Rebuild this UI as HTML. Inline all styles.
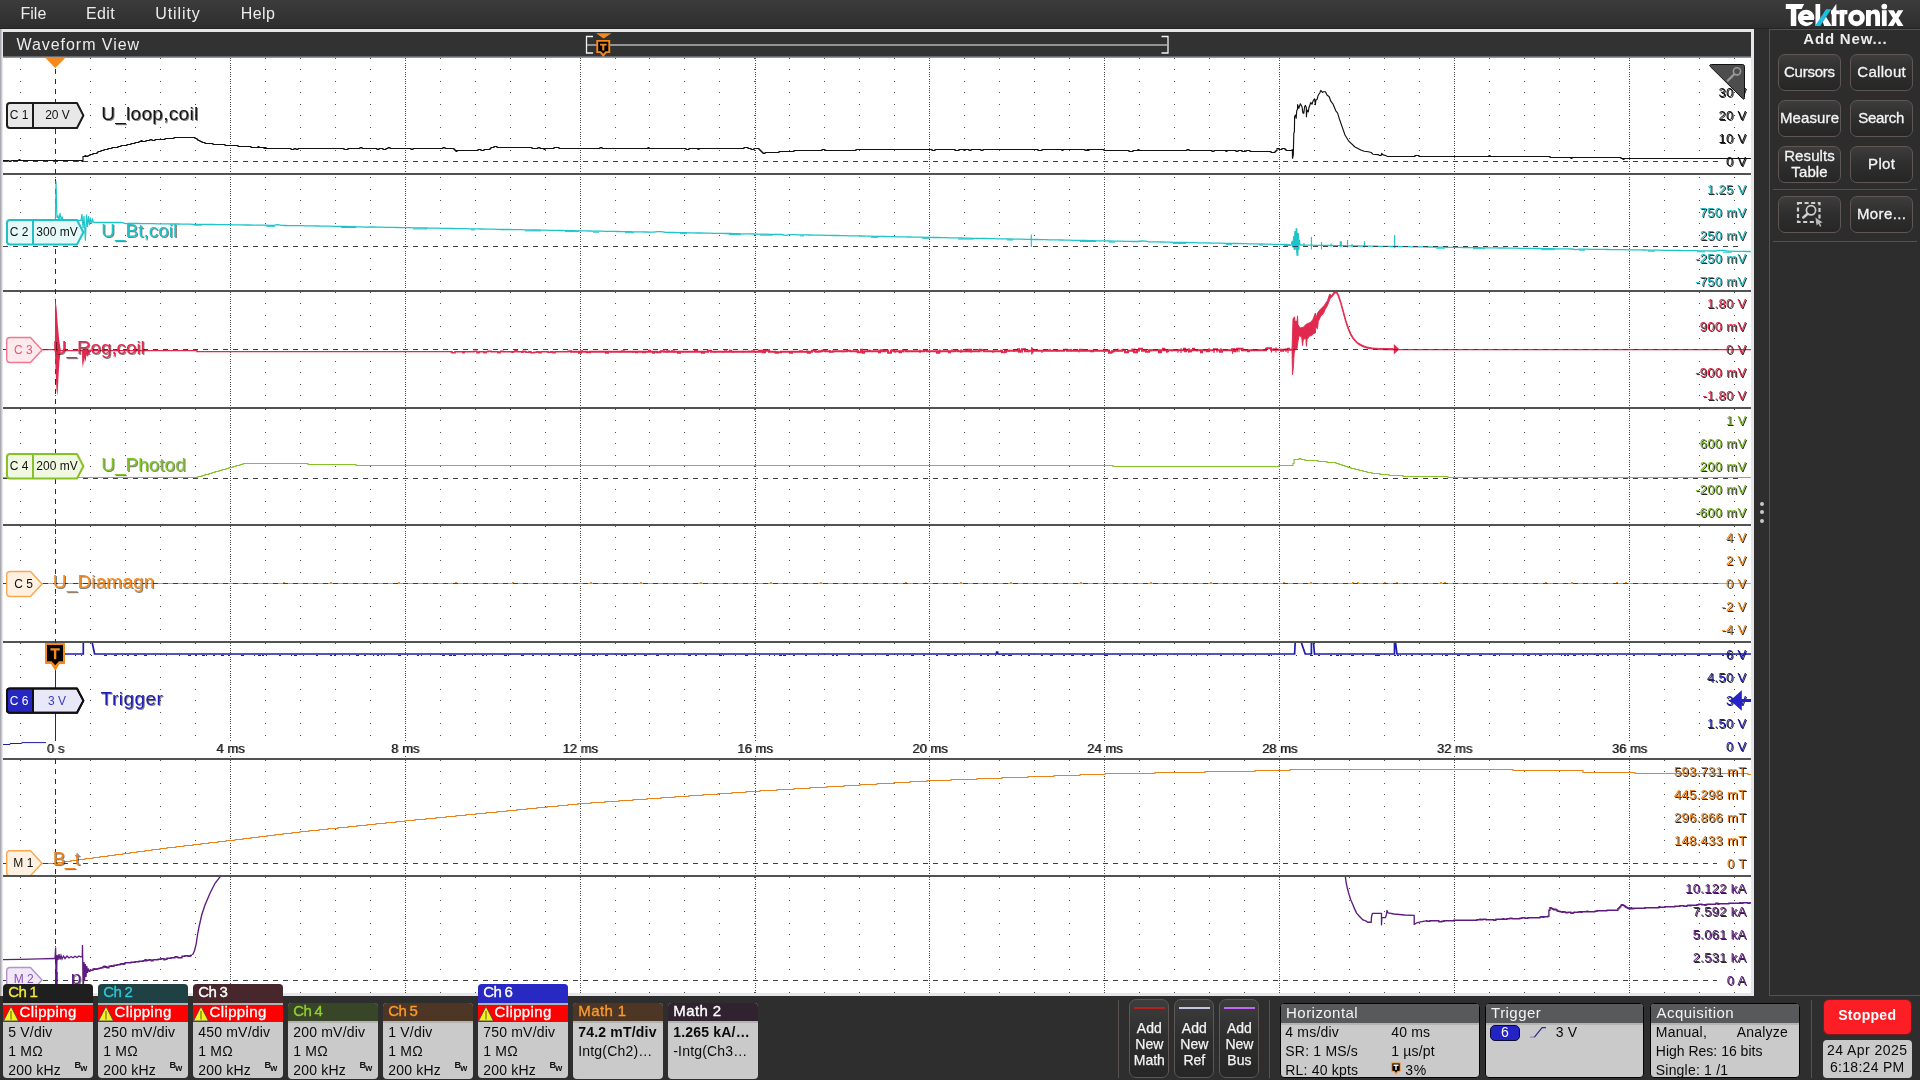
<!DOCTYPE html><html><head><meta charset="utf-8"><title>Waveform View</title><style>
html,body{margin:0;padding:0;}body{width:1920px;height:1080px;overflow:hidden;background:#2e2e2e;font-family:"Liberation Sans", sans-serif;position:relative;}
div{box-sizing:border-box;}svg{position:absolute;left:0;top:0;}
.btn{position:absolute;border:1px solid #5e5753;border-radius:7px;background:linear-gradient(#3d3d3d 0%,#2f2f2f 45%,#262626 100%);}
.t{fill:none;stroke-width:1.15;}.f{stroke:none;}
.c1{stroke:#111;stroke-width:1.15}.c2{stroke:#1fc3cb}.c3{stroke:#e0294d}.c3f{fill:#e0294d}.c4{stroke:#84c225}.c5{stroke:#f5931f}.c6{stroke:#1c1cb4}.m1{stroke:#e8831c}.m2{stroke:#5e1a7e;stroke-width:1.35}
.lb{position:absolute;right:173.6px;letter-spacing:.3px;font-size:13px;line-height:15px;height:15px;white-space:nowrap;text-shadow:1px 1px 0 rgba(0,0,0,.85);}
.tl{position:absolute;font-size:13px;line-height:15px;height:15px;width:80px;text-align:center;white-space:nowrap;color:#222;text-shadow:1px 0 0 rgba(0,0,0,.55);}
.tl span{background:#fff;padding:0 1px;}
.nm{position:absolute;font-size:19px;line-height:23px;white-space:nowrap;text-shadow:1px 1px 0 rgba(0,0,0,.5);}
.bt{position:absolute;font-size:12px;line-height:14px;height:14px;white-space:nowrap;text-align:center;}
</style></head><body><div id="root" style="position:absolute;left:0;top:0;width:1920px;height:1080px;overflow:hidden;will-change:transform;">
<div style="position:absolute;left:0px;top:0px;width:1920px;height:29px;background:linear-gradient(#3c3c3c,#2d2d2d);"></div>
<div style="position:absolute;left:0px;top:28px;width:1920px;height:1px;background:#242424;"></div>
<div style="position:absolute;top:5.00px;font-size:16px;color:#ececec;white-space:nowrap;line-height:normal;left:20.50px;">File</div>
<div style="position:absolute;top:5.00px;font-size:16px;color:#ececec;white-space:nowrap;line-height:normal;letter-spacing:0.4px;left:86.00px;">Edit</div>
<div style="position:absolute;top:5.00px;font-size:16px;color:#ececec;white-space:nowrap;line-height:normal;letter-spacing:0.9px;left:155.30px;">Utility</div>
<div style="position:absolute;top:5.00px;font-size:16px;color:#ececec;white-space:nowrap;line-height:normal;letter-spacing:0.4px;left:240.70px;">Help</div>
<div style="position:absolute;left:0px;top:29px;width:1754px;height:967px;background:linear-gradient(90deg,#9a9aa0 0px,#d8d8dc 2px,#f4f4f6 3px);"></div>
<div style="position:absolute;left:3px;top:29px;width:1751px;height:967px;background:#e6e6ea;"></div>
<div style="position:absolute;left:3px;top:32px;width:1748px;height:24.4px;background:#323232;"></div>
<div style="position:absolute;left:3px;top:56.4px;width:1748px;height:1.4px;background:#646a70;"></div>
<div style="position:absolute;top:36.00px;font-size:16px;color:#ececec;white-space:nowrap;line-height:normal;letter-spacing:0.95px;left:16.50px;">Waveform View</div>
<svg width="1920" height="1080" viewBox="0 0 1920 1080">
<defs>
<path id="dr" d="M20 0h1m34 0h1m34 0h1m34 0h1m34 0h1m34 0h1m34 0h1m34 0h1m34 0h1m34 0h1m34 0h1m34 0h1m34 0h1m34 0h1m34 0h1m34 0h1m34 0h1m34 0h1m33 0h1m34 0h1m34 0h1m34 0h1m34 0h1m34 0h1m34 0h1m34 0h1m34 0h1m34 0h1m34 0h1m34 0h1m34 0h1m34 0h1m34 0h1m34 0h1m34 0h1m34 0h1m34 0h1m34 0h1m34 0h1m34 0h1m34 0h1m34 0h1m34 0h1m34 0h1m34 0h1m34 0h1m34 0h1m34 0h1m34 0h1m34 0h1" stroke="#4a4a4a" stroke-width="1" fill="none" shape-rendering="crispEdges"/>
</defs>
<rect x="3" y="57.7" width="1748" height="935.3" fill="#fff"/>
<use href="#dr" y="58.5"/><use href="#dr" y="69.5"/><use href="#dr" y="81.5"/><use href="#dr" y="92.5"/><use href="#dr" y="104.5"/><use href="#dr" y="115.5"/><use href="#dr" y="127.5"/><use href="#dr" y="138.5"/><use href="#dr" y="150.5"/><use href="#dr" y="177.5"/><use href="#dr" y="189.5"/><use href="#dr" y="200.5"/><use href="#dr" y="212.5"/><use href="#dr" y="223.5"/><use href="#dr" y="235.5"/><use href="#dr" y="258.5"/><use href="#dr" y="269.5"/><use href="#dr" y="281.5"/><use href="#dr" y="292.5"/><use href="#dr" y="303.5"/><use href="#dr" y="315.5"/><use href="#dr" y="326.5"/><use href="#dr" y="338.5"/><use href="#dr" y="361.5"/><use href="#dr" y="372.5"/><use href="#dr" y="384.5"/><use href="#dr" y="395.5"/><use href="#dr" y="409.5"/><use href="#dr" y="420.5"/><use href="#dr" y="432.5"/><use href="#dr" y="443.5"/><use href="#dr" y="455.5"/><use href="#dr" y="466.5"/><use href="#dr" y="489.5"/><use href="#dr" y="501.5"/><use href="#dr" y="512.5"/><use href="#dr" y="526.5"/><use href="#dr" y="537.5"/><use href="#dr" y="549.5"/><use href="#dr" y="560.5"/><use href="#dr" y="572.5"/><use href="#dr" y="595.5"/><use href="#dr" y="606.5"/><use href="#dr" y="618.5"/><use href="#dr" y="629.5"/><use href="#dr" y="643.5"/><use href="#dr" y="654.5"/><use href="#dr" y="666.5"/><use href="#dr" y="677.5"/><use href="#dr" y="689.5"/><use href="#dr" y="700.5"/><use href="#dr" y="712.5"/><use href="#dr" y="723.5"/><use href="#dr" y="735.5"/><use href="#dr" y="760.5"/><use href="#dr" y="771.5"/><use href="#dr" y="783.5"/><use href="#dr" y="794.5"/><use href="#dr" y="806.5"/><use href="#dr" y="817.5"/><use href="#dr" y="829.5"/><use href="#dr" y="840.5"/><use href="#dr" y="852.5"/><use href="#dr" y="877.5"/><use href="#dr" y="888.5"/><use href="#dr" y="900.5"/><use href="#dr" y="911.5"/><use href="#dr" y="923.5"/><use href="#dr" y="934.5"/><use href="#dr" y="946.5"/><use href="#dr" y="957.5"/><use href="#dr" y="969.5"/><use href="#dr" y="992.5"/>
<path d="M230.5 58v1m0 1v1m0 2v1m0 1v1m0 1v1m0 1v1m0 2v1m0 1v1m0 1v1m0 2v1m0 1v1m0 1v1m0 2v1m0 1v1m0 1v1m0 1v1m0 2v1m0 1v1m0 1v1m0 2v1m0 1v1m0 1v1m0 2v1m0 1v1m0 1v1m0 1v1m0 2v1m0 1v1m0 1v1m0 2v1m0 1v1m0 1v1m0 2v1m0 1v1m0 1v1m0 1v1m0 2v1m0 1v1m0 1v1m0 2v1m0 1v1m0 1v1m0 2v1m0 1v1m0 1v1m0 1v1m0 2v1m0 1v1m0 1v1m0 2v1M405.5 58v1m0 1v1m0 2v1m0 1v1m0 1v1m0 1v1m0 2v1m0 1v1m0 1v1m0 2v1m0 1v1m0 1v1m0 2v1m0 1v1m0 1v1m0 1v1m0 2v1m0 1v1m0 1v1m0 2v1m0 1v1m0 1v1m0 2v1m0 1v1m0 1v1m0 1v1m0 2v1m0 1v1m0 1v1m0 2v1m0 1v1m0 1v1m0 2v1m0 1v1m0 1v1m0 1v1m0 2v1m0 1v1m0 1v1m0 2v1m0 1v1m0 1v1m0 2v1m0 1v1m0 1v1m0 1v1m0 2v1m0 1v1m0 1v1m0 2v1M580.5 58v1m0 1v1m0 2v1m0 1v1m0 1v1m0 1v1m0 2v1m0 1v1m0 1v1m0 2v1m0 1v1m0 1v1m0 2v1m0 1v1m0 1v1m0 1v1m0 2v1m0 1v1m0 1v1m0 2v1m0 1v1m0 1v1m0 2v1m0 1v1m0 1v1m0 1v1m0 2v1m0 1v1m0 1v1m0 2v1m0 1v1m0 1v1m0 2v1m0 1v1m0 1v1m0 1v1m0 2v1m0 1v1m0 1v1m0 2v1m0 1v1m0 1v1m0 2v1m0 1v1m0 1v1m0 1v1m0 2v1m0 1v1m0 1v1m0 2v1M755.5 58v1m0 1v1m0 2v1m0 1v1m0 1v1m0 1v1m0 2v1m0 1v1m0 1v1m0 2v1m0 1v1m0 1v1m0 2v1m0 1v1m0 1v1m0 1v1m0 2v1m0 1v1m0 1v1m0 2v1m0 1v1m0 1v1m0 2v1m0 1v1m0 1v1m0 1v1m0 2v1m0 1v1m0 1v1m0 2v1m0 1v1m0 1v1m0 2v1m0 1v1m0 1v1m0 1v1m0 2v1m0 1v1m0 1v1m0 2v1m0 1v1m0 1v1m0 2v1m0 1v1m0 1v1m0 1v1m0 2v1m0 1v1m0 1v1m0 2v1M929.5 58v1m0 1v1m0 2v1m0 1v1m0 1v1m0 1v1m0 2v1m0 1v1m0 1v1m0 2v1m0 1v1m0 1v1m0 2v1m0 1v1m0 1v1m0 1v1m0 2v1m0 1v1m0 1v1m0 2v1m0 1v1m0 1v1m0 2v1m0 1v1m0 1v1m0 1v1m0 2v1m0 1v1m0 1v1m0 2v1m0 1v1m0 1v1m0 2v1m0 1v1m0 1v1m0 1v1m0 2v1m0 1v1m0 1v1m0 2v1m0 1v1m0 1v1m0 2v1m0 1v1m0 1v1m0 1v1m0 2v1m0 1v1m0 1v1m0 2v1M1104.5 58v1m0 1v1m0 2v1m0 1v1m0 1v1m0 1v1m0 2v1m0 1v1m0 1v1m0 2v1m0 1v1m0 1v1m0 2v1m0 1v1m0 1v1m0 1v1m0 2v1m0 1v1m0 1v1m0 2v1m0 1v1m0 1v1m0 2v1m0 1v1m0 1v1m0 1v1m0 2v1m0 1v1m0 1v1m0 2v1m0 1v1m0 1v1m0 2v1m0 1v1m0 1v1m0 1v1m0 2v1m0 1v1m0 1v1m0 2v1m0 1v1m0 1v1m0 2v1m0 1v1m0 1v1m0 1v1m0 2v1m0 1v1m0 1v1m0 2v1M1279.5 58v1m0 1v1m0 2v1m0 1v1m0 1v1m0 1v1m0 2v1m0 1v1m0 1v1m0 2v1m0 1v1m0 1v1m0 2v1m0 1v1m0 1v1m0 1v1m0 2v1m0 1v1m0 1v1m0 2v1m0 1v1m0 1v1m0 2v1m0 1v1m0 1v1m0 1v1m0 2v1m0 1v1m0 1v1m0 2v1m0 1v1m0 1v1m0 2v1m0 1v1m0 1v1m0 1v1m0 2v1m0 1v1m0 1v1m0 2v1m0 1v1m0 1v1m0 2v1m0 1v1m0 1v1m0 1v1m0 2v1m0 1v1m0 1v1m0 2v1M1454.5 58v1m0 1v1m0 2v1m0 1v1m0 1v1m0 1v1m0 2v1m0 1v1m0 1v1m0 2v1m0 1v1m0 1v1m0 2v1m0 1v1m0 1v1m0 1v1m0 2v1m0 1v1m0 1v1m0 2v1m0 1v1m0 1v1m0 2v1m0 1v1m0 1v1m0 1v1m0 2v1m0 1v1m0 1v1m0 2v1m0 1v1m0 1v1m0 2v1m0 1v1m0 1v1m0 1v1m0 2v1m0 1v1m0 1v1m0 2v1m0 1v1m0 1v1m0 2v1m0 1v1m0 1v1m0 1v1m0 2v1m0 1v1m0 1v1m0 2v1M1629.5 58v1m0 1v1m0 2v1m0 1v1m0 1v1m0 1v1m0 2v1m0 1v1m0 1v1m0 2v1m0 1v1m0 1v1m0 2v1m0 1v1m0 1v1m0 1v1m0 2v1m0 1v1m0 1v1m0 2v1m0 1v1m0 1v1m0 2v1m0 1v1m0 1v1m0 1v1m0 2v1m0 1v1m0 1v1m0 2v1m0 1v1m0 1v1m0 2v1m0 1v1m0 1v1m0 1v1m0 2v1m0 1v1m0 1v1m0 2v1m0 1v1m0 1v1m0 2v1m0 1v1m0 1v1m0 1v1m0 2v1m0 1v1m0 1v1m0 2v1M230.5 177v1m0 1v1m0 2v1m0 1v1m0 1v1m0 2v1m0 1v1m0 1v1m0 1v1m0 2v1m0 1v1m0 1v1m0 2v1m0 1v1m0 1v1m0 2v1m0 1v1m0 1v1m0 1v1m0 2v1m0 1v1m0 1v1m0 2v1m0 1v1m0 1v1m0 2v1m0 1v1m0 1v1m0 1v1m0 2v1m0 1v1m0 1v1m0 2v1m0 1v1m0 1v1m0 2v1m0 1v1m0 1v1m0 1v1m0 2v1m0 1v1m0 1v1m0 2v1m0 1v1m0 1v1m0 2v1m0 1v1m0 1v1m0 1v1M405.5 177v1m0 1v1m0 2v1m0 1v1m0 1v1m0 2v1m0 1v1m0 1v1m0 1v1m0 2v1m0 1v1m0 1v1m0 2v1m0 1v1m0 1v1m0 2v1m0 1v1m0 1v1m0 1v1m0 2v1m0 1v1m0 1v1m0 2v1m0 1v1m0 1v1m0 2v1m0 1v1m0 1v1m0 1v1m0 2v1m0 1v1m0 1v1m0 2v1m0 1v1m0 1v1m0 2v1m0 1v1m0 1v1m0 1v1m0 2v1m0 1v1m0 1v1m0 2v1m0 1v1m0 1v1m0 2v1m0 1v1m0 1v1m0 1v1M580.5 177v1m0 1v1m0 2v1m0 1v1m0 1v1m0 2v1m0 1v1m0 1v1m0 1v1m0 2v1m0 1v1m0 1v1m0 2v1m0 1v1m0 1v1m0 2v1m0 1v1m0 1v1m0 1v1m0 2v1m0 1v1m0 1v1m0 2v1m0 1v1m0 1v1m0 2v1m0 1v1m0 1v1m0 1v1m0 2v1m0 1v1m0 1v1m0 2v1m0 1v1m0 1v1m0 2v1m0 1v1m0 1v1m0 1v1m0 2v1m0 1v1m0 1v1m0 2v1m0 1v1m0 1v1m0 2v1m0 1v1m0 1v1m0 1v1M755.5 177v1m0 1v1m0 2v1m0 1v1m0 1v1m0 2v1m0 1v1m0 1v1m0 1v1m0 2v1m0 1v1m0 1v1m0 2v1m0 1v1m0 1v1m0 2v1m0 1v1m0 1v1m0 1v1m0 2v1m0 1v1m0 1v1m0 2v1m0 1v1m0 1v1m0 2v1m0 1v1m0 1v1m0 1v1m0 2v1m0 1v1m0 1v1m0 2v1m0 1v1m0 1v1m0 2v1m0 1v1m0 1v1m0 1v1m0 2v1m0 1v1m0 1v1m0 2v1m0 1v1m0 1v1m0 2v1m0 1v1m0 1v1m0 1v1M929.5 177v1m0 1v1m0 2v1m0 1v1m0 1v1m0 2v1m0 1v1m0 1v1m0 1v1m0 2v1m0 1v1m0 1v1m0 2v1m0 1v1m0 1v1m0 2v1m0 1v1m0 1v1m0 1v1m0 2v1m0 1v1m0 1v1m0 2v1m0 1v1m0 1v1m0 2v1m0 1v1m0 1v1m0 1v1m0 2v1m0 1v1m0 1v1m0 2v1m0 1v1m0 1v1m0 2v1m0 1v1m0 1v1m0 1v1m0 2v1m0 1v1m0 1v1m0 2v1m0 1v1m0 1v1m0 2v1m0 1v1m0 1v1m0 1v1M1104.5 177v1m0 1v1m0 2v1m0 1v1m0 1v1m0 2v1m0 1v1m0 1v1m0 1v1m0 2v1m0 1v1m0 1v1m0 2v1m0 1v1m0 1v1m0 2v1m0 1v1m0 1v1m0 1v1m0 2v1m0 1v1m0 1v1m0 2v1m0 1v1m0 1v1m0 2v1m0 1v1m0 1v1m0 1v1m0 2v1m0 1v1m0 1v1m0 2v1m0 1v1m0 1v1m0 2v1m0 1v1m0 1v1m0 1v1m0 2v1m0 1v1m0 1v1m0 2v1m0 1v1m0 1v1m0 2v1m0 1v1m0 1v1m0 1v1M1279.5 177v1m0 1v1m0 2v1m0 1v1m0 1v1m0 2v1m0 1v1m0 1v1m0 1v1m0 2v1m0 1v1m0 1v1m0 2v1m0 1v1m0 1v1m0 2v1m0 1v1m0 1v1m0 1v1m0 2v1m0 1v1m0 1v1m0 2v1m0 1v1m0 1v1m0 2v1m0 1v1m0 1v1m0 1v1m0 2v1m0 1v1m0 1v1m0 2v1m0 1v1m0 1v1m0 2v1m0 1v1m0 1v1m0 1v1m0 2v1m0 1v1m0 1v1m0 2v1m0 1v1m0 1v1m0 2v1m0 1v1m0 1v1m0 1v1M1454.5 177v1m0 1v1m0 2v1m0 1v1m0 1v1m0 2v1m0 1v1m0 1v1m0 1v1m0 2v1m0 1v1m0 1v1m0 2v1m0 1v1m0 1v1m0 2v1m0 1v1m0 1v1m0 1v1m0 2v1m0 1v1m0 1v1m0 2v1m0 1v1m0 1v1m0 2v1m0 1v1m0 1v1m0 1v1m0 2v1m0 1v1m0 1v1m0 2v1m0 1v1m0 1v1m0 2v1m0 1v1m0 1v1m0 1v1m0 2v1m0 1v1m0 1v1m0 2v1m0 1v1m0 1v1m0 2v1m0 1v1m0 1v1m0 1v1M1629.5 177v1m0 1v1m0 2v1m0 1v1m0 1v1m0 2v1m0 1v1m0 1v1m0 1v1m0 2v1m0 1v1m0 1v1m0 2v1m0 1v1m0 1v1m0 2v1m0 1v1m0 1v1m0 1v1m0 2v1m0 1v1m0 1v1m0 2v1m0 1v1m0 1v1m0 2v1m0 1v1m0 1v1m0 1v1m0 2v1m0 1v1m0 1v1m0 2v1m0 1v1m0 1v1m0 2v1m0 1v1m0 1v1m0 1v1m0 2v1m0 1v1m0 1v1m0 2v1m0 1v1m0 1v1m0 2v1m0 1v1m0 1v1m0 1v1M230.5 292v1m0 1v1m0 2v1m0 1v1m0 1v1m0 1v1m0 2v1m0 1v1m0 1v1m0 2v1m0 1v1m0 1v1m0 2v1m0 1v1m0 1v1m0 1v1m0 2v1m0 1v1m0 1v1m0 2v1m0 1v1m0 1v1m0 2v1m0 1v1m0 1v1m0 1v1m0 2v1m0 1v1m0 1v1m0 2v1m0 1v1m0 1v1m0 2v1m0 1v1m0 1v1m0 1v1m0 2v1m0 1v1m0 1v1m0 2v1m0 1v1m0 1v1m0 2v1m0 1v1m0 1v1m0 1v1m0 2v1m0 1v1m0 1v1m0 2v1M405.5 292v1m0 1v1m0 2v1m0 1v1m0 1v1m0 1v1m0 2v1m0 1v1m0 1v1m0 2v1m0 1v1m0 1v1m0 2v1m0 1v1m0 1v1m0 1v1m0 2v1m0 1v1m0 1v1m0 2v1m0 1v1m0 1v1m0 2v1m0 1v1m0 1v1m0 1v1m0 2v1m0 1v1m0 1v1m0 2v1m0 1v1m0 1v1m0 2v1m0 1v1m0 1v1m0 1v1m0 2v1m0 1v1m0 1v1m0 2v1m0 1v1m0 1v1m0 2v1m0 1v1m0 1v1m0 1v1m0 2v1m0 1v1m0 1v1m0 2v1M580.5 292v1m0 1v1m0 2v1m0 1v1m0 1v1m0 1v1m0 2v1m0 1v1m0 1v1m0 2v1m0 1v1m0 1v1m0 2v1m0 1v1m0 1v1m0 1v1m0 2v1m0 1v1m0 1v1m0 2v1m0 1v1m0 1v1m0 2v1m0 1v1m0 1v1m0 1v1m0 2v1m0 1v1m0 1v1m0 2v1m0 1v1m0 1v1m0 2v1m0 1v1m0 1v1m0 1v1m0 2v1m0 1v1m0 1v1m0 2v1m0 1v1m0 1v1m0 2v1m0 1v1m0 1v1m0 1v1m0 2v1m0 1v1m0 1v1m0 2v1M755.5 292v1m0 1v1m0 2v1m0 1v1m0 1v1m0 1v1m0 2v1m0 1v1m0 1v1m0 2v1m0 1v1m0 1v1m0 2v1m0 1v1m0 1v1m0 1v1m0 2v1m0 1v1m0 1v1m0 2v1m0 1v1m0 1v1m0 2v1m0 1v1m0 1v1m0 1v1m0 2v1m0 1v1m0 1v1m0 2v1m0 1v1m0 1v1m0 2v1m0 1v1m0 1v1m0 1v1m0 2v1m0 1v1m0 1v1m0 2v1m0 1v1m0 1v1m0 2v1m0 1v1m0 1v1m0 1v1m0 2v1m0 1v1m0 1v1m0 2v1M929.5 292v1m0 1v1m0 2v1m0 1v1m0 1v1m0 1v1m0 2v1m0 1v1m0 1v1m0 2v1m0 1v1m0 1v1m0 2v1m0 1v1m0 1v1m0 1v1m0 2v1m0 1v1m0 1v1m0 2v1m0 1v1m0 1v1m0 2v1m0 1v1m0 1v1m0 1v1m0 2v1m0 1v1m0 1v1m0 2v1m0 1v1m0 1v1m0 2v1m0 1v1m0 1v1m0 1v1m0 2v1m0 1v1m0 1v1m0 2v1m0 1v1m0 1v1m0 2v1m0 1v1m0 1v1m0 1v1m0 2v1m0 1v1m0 1v1m0 2v1M1104.5 292v1m0 1v1m0 2v1m0 1v1m0 1v1m0 1v1m0 2v1m0 1v1m0 1v1m0 2v1m0 1v1m0 1v1m0 2v1m0 1v1m0 1v1m0 1v1m0 2v1m0 1v1m0 1v1m0 2v1m0 1v1m0 1v1m0 2v1m0 1v1m0 1v1m0 1v1m0 2v1m0 1v1m0 1v1m0 2v1m0 1v1m0 1v1m0 2v1m0 1v1m0 1v1m0 1v1m0 2v1m0 1v1m0 1v1m0 2v1m0 1v1m0 1v1m0 2v1m0 1v1m0 1v1m0 1v1m0 2v1m0 1v1m0 1v1m0 2v1M1279.5 292v1m0 1v1m0 2v1m0 1v1m0 1v1m0 1v1m0 2v1m0 1v1m0 1v1m0 2v1m0 1v1m0 1v1m0 2v1m0 1v1m0 1v1m0 1v1m0 2v1m0 1v1m0 1v1m0 2v1m0 1v1m0 1v1m0 2v1m0 1v1m0 1v1m0 1v1m0 2v1m0 1v1m0 1v1m0 2v1m0 1v1m0 1v1m0 2v1m0 1v1m0 1v1m0 1v1m0 2v1m0 1v1m0 1v1m0 2v1m0 1v1m0 1v1m0 2v1m0 1v1m0 1v1m0 1v1m0 2v1m0 1v1m0 1v1m0 2v1M1454.5 292v1m0 1v1m0 2v1m0 1v1m0 1v1m0 1v1m0 2v1m0 1v1m0 1v1m0 2v1m0 1v1m0 1v1m0 2v1m0 1v1m0 1v1m0 1v1m0 2v1m0 1v1m0 1v1m0 2v1m0 1v1m0 1v1m0 2v1m0 1v1m0 1v1m0 1v1m0 2v1m0 1v1m0 1v1m0 2v1m0 1v1m0 1v1m0 2v1m0 1v1m0 1v1m0 1v1m0 2v1m0 1v1m0 1v1m0 2v1m0 1v1m0 1v1m0 2v1m0 1v1m0 1v1m0 1v1m0 2v1m0 1v1m0 1v1m0 2v1M1629.5 292v1m0 1v1m0 2v1m0 1v1m0 1v1m0 1v1m0 2v1m0 1v1m0 1v1m0 2v1m0 1v1m0 1v1m0 2v1m0 1v1m0 1v1m0 1v1m0 2v1m0 1v1m0 1v1m0 2v1m0 1v1m0 1v1m0 2v1m0 1v1m0 1v1m0 1v1m0 2v1m0 1v1m0 1v1m0 2v1m0 1v1m0 1v1m0 2v1m0 1v1m0 1v1m0 1v1m0 2v1m0 1v1m0 1v1m0 2v1m0 1v1m0 1v1m0 2v1m0 1v1m0 1v1m0 1v1m0 2v1m0 1v1m0 1v1m0 2v1M230.5 409v1m0 1v1m0 2v1m0 1v1m0 1v1m0 1v1m0 2v1m0 1v1m0 1v1m0 2v1m0 1v1m0 1v1m0 2v1m0 1v1m0 1v1m0 1v1m0 2v1m0 1v1m0 1v1m0 2v1m0 1v1m0 1v1m0 2v1m0 1v1m0 1v1m0 1v1m0 2v1m0 1v1m0 1v1m0 2v1m0 1v1m0 1v1m0 2v1m0 1v1m0 1v1m0 1v1m0 2v1m0 1v1m0 1v1m0 2v1m0 1v1m0 1v1m0 2v1m0 1v1m0 1v1m0 1v1m0 2v1m0 1v1m0 1v1m0 2v1M405.5 409v1m0 1v1m0 2v1m0 1v1m0 1v1m0 1v1m0 2v1m0 1v1m0 1v1m0 2v1m0 1v1m0 1v1m0 2v1m0 1v1m0 1v1m0 1v1m0 2v1m0 1v1m0 1v1m0 2v1m0 1v1m0 1v1m0 2v1m0 1v1m0 1v1m0 1v1m0 2v1m0 1v1m0 1v1m0 2v1m0 1v1m0 1v1m0 2v1m0 1v1m0 1v1m0 1v1m0 2v1m0 1v1m0 1v1m0 2v1m0 1v1m0 1v1m0 2v1m0 1v1m0 1v1m0 1v1m0 2v1m0 1v1m0 1v1m0 2v1M580.5 409v1m0 1v1m0 2v1m0 1v1m0 1v1m0 1v1m0 2v1m0 1v1m0 1v1m0 2v1m0 1v1m0 1v1m0 2v1m0 1v1m0 1v1m0 1v1m0 2v1m0 1v1m0 1v1m0 2v1m0 1v1m0 1v1m0 2v1m0 1v1m0 1v1m0 1v1m0 2v1m0 1v1m0 1v1m0 2v1m0 1v1m0 1v1m0 2v1m0 1v1m0 1v1m0 1v1m0 2v1m0 1v1m0 1v1m0 2v1m0 1v1m0 1v1m0 2v1m0 1v1m0 1v1m0 1v1m0 2v1m0 1v1m0 1v1m0 2v1M755.5 409v1m0 1v1m0 2v1m0 1v1m0 1v1m0 1v1m0 2v1m0 1v1m0 1v1m0 2v1m0 1v1m0 1v1m0 2v1m0 1v1m0 1v1m0 1v1m0 2v1m0 1v1m0 1v1m0 2v1m0 1v1m0 1v1m0 2v1m0 1v1m0 1v1m0 1v1m0 2v1m0 1v1m0 1v1m0 2v1m0 1v1m0 1v1m0 2v1m0 1v1m0 1v1m0 1v1m0 2v1m0 1v1m0 1v1m0 2v1m0 1v1m0 1v1m0 2v1m0 1v1m0 1v1m0 1v1m0 2v1m0 1v1m0 1v1m0 2v1M929.5 409v1m0 1v1m0 2v1m0 1v1m0 1v1m0 1v1m0 2v1m0 1v1m0 1v1m0 2v1m0 1v1m0 1v1m0 2v1m0 1v1m0 1v1m0 1v1m0 2v1m0 1v1m0 1v1m0 2v1m0 1v1m0 1v1m0 2v1m0 1v1m0 1v1m0 1v1m0 2v1m0 1v1m0 1v1m0 2v1m0 1v1m0 1v1m0 2v1m0 1v1m0 1v1m0 1v1m0 2v1m0 1v1m0 1v1m0 2v1m0 1v1m0 1v1m0 2v1m0 1v1m0 1v1m0 1v1m0 2v1m0 1v1m0 1v1m0 2v1M1104.5 409v1m0 1v1m0 2v1m0 1v1m0 1v1m0 1v1m0 2v1m0 1v1m0 1v1m0 2v1m0 1v1m0 1v1m0 2v1m0 1v1m0 1v1m0 1v1m0 2v1m0 1v1m0 1v1m0 2v1m0 1v1m0 1v1m0 2v1m0 1v1m0 1v1m0 1v1m0 2v1m0 1v1m0 1v1m0 2v1m0 1v1m0 1v1m0 2v1m0 1v1m0 1v1m0 1v1m0 2v1m0 1v1m0 1v1m0 2v1m0 1v1m0 1v1m0 2v1m0 1v1m0 1v1m0 1v1m0 2v1m0 1v1m0 1v1m0 2v1M1279.5 409v1m0 1v1m0 2v1m0 1v1m0 1v1m0 1v1m0 2v1m0 1v1m0 1v1m0 2v1m0 1v1m0 1v1m0 2v1m0 1v1m0 1v1m0 1v1m0 2v1m0 1v1m0 1v1m0 2v1m0 1v1m0 1v1m0 2v1m0 1v1m0 1v1m0 1v1m0 2v1m0 1v1m0 1v1m0 2v1m0 1v1m0 1v1m0 2v1m0 1v1m0 1v1m0 1v1m0 2v1m0 1v1m0 1v1m0 2v1m0 1v1m0 1v1m0 2v1m0 1v1m0 1v1m0 1v1m0 2v1m0 1v1m0 1v1m0 2v1M1454.5 409v1m0 1v1m0 2v1m0 1v1m0 1v1m0 1v1m0 2v1m0 1v1m0 1v1m0 2v1m0 1v1m0 1v1m0 2v1m0 1v1m0 1v1m0 1v1m0 2v1m0 1v1m0 1v1m0 2v1m0 1v1m0 1v1m0 2v1m0 1v1m0 1v1m0 1v1m0 2v1m0 1v1m0 1v1m0 2v1m0 1v1m0 1v1m0 2v1m0 1v1m0 1v1m0 1v1m0 2v1m0 1v1m0 1v1m0 2v1m0 1v1m0 1v1m0 2v1m0 1v1m0 1v1m0 1v1m0 2v1m0 1v1m0 1v1m0 2v1M1629.5 409v1m0 1v1m0 2v1m0 1v1m0 1v1m0 1v1m0 2v1m0 1v1m0 1v1m0 2v1m0 1v1m0 1v1m0 2v1m0 1v1m0 1v1m0 1v1m0 2v1m0 1v1m0 1v1m0 2v1m0 1v1m0 1v1m0 2v1m0 1v1m0 1v1m0 1v1m0 2v1m0 1v1m0 1v1m0 2v1m0 1v1m0 1v1m0 2v1m0 1v1m0 1v1m0 1v1m0 2v1m0 1v1m0 1v1m0 2v1m0 1v1m0 1v1m0 2v1m0 1v1m0 1v1m0 1v1m0 2v1m0 1v1m0 1v1m0 2v1M230.5 526v1m0 1v1m0 2v1m0 1v1m0 1v1m0 1v1m0 2v1m0 1v1m0 1v1m0 2v1m0 1v1m0 1v1m0 2v1m0 1v1m0 1v1m0 1v1m0 2v1m0 1v1m0 1v1m0 2v1m0 1v1m0 1v1m0 2v1m0 1v1m0 1v1m0 1v1m0 2v1m0 1v1m0 1v1m0 2v1m0 1v1m0 1v1m0 2v1m0 1v1m0 1v1m0 1v1m0 2v1m0 1v1m0 1v1m0 2v1m0 1v1m0 1v1m0 2v1m0 1v1m0 1v1m0 1v1m0 2v1m0 1v1m0 1v1m0 2v1M405.5 526v1m0 1v1m0 2v1m0 1v1m0 1v1m0 1v1m0 2v1m0 1v1m0 1v1m0 2v1m0 1v1m0 1v1m0 2v1m0 1v1m0 1v1m0 1v1m0 2v1m0 1v1m0 1v1m0 2v1m0 1v1m0 1v1m0 2v1m0 1v1m0 1v1m0 1v1m0 2v1m0 1v1m0 1v1m0 2v1m0 1v1m0 1v1m0 2v1m0 1v1m0 1v1m0 1v1m0 2v1m0 1v1m0 1v1m0 2v1m0 1v1m0 1v1m0 2v1m0 1v1m0 1v1m0 1v1m0 2v1m0 1v1m0 1v1m0 2v1M580.5 526v1m0 1v1m0 2v1m0 1v1m0 1v1m0 1v1m0 2v1m0 1v1m0 1v1m0 2v1m0 1v1m0 1v1m0 2v1m0 1v1m0 1v1m0 1v1m0 2v1m0 1v1m0 1v1m0 2v1m0 1v1m0 1v1m0 2v1m0 1v1m0 1v1m0 1v1m0 2v1m0 1v1m0 1v1m0 2v1m0 1v1m0 1v1m0 2v1m0 1v1m0 1v1m0 1v1m0 2v1m0 1v1m0 1v1m0 2v1m0 1v1m0 1v1m0 2v1m0 1v1m0 1v1m0 1v1m0 2v1m0 1v1m0 1v1m0 2v1M755.5 526v1m0 1v1m0 2v1m0 1v1m0 1v1m0 1v1m0 2v1m0 1v1m0 1v1m0 2v1m0 1v1m0 1v1m0 2v1m0 1v1m0 1v1m0 1v1m0 2v1m0 1v1m0 1v1m0 2v1m0 1v1m0 1v1m0 2v1m0 1v1m0 1v1m0 1v1m0 2v1m0 1v1m0 1v1m0 2v1m0 1v1m0 1v1m0 2v1m0 1v1m0 1v1m0 1v1m0 2v1m0 1v1m0 1v1m0 2v1m0 1v1m0 1v1m0 2v1m0 1v1m0 1v1m0 1v1m0 2v1m0 1v1m0 1v1m0 2v1M929.5 526v1m0 1v1m0 2v1m0 1v1m0 1v1m0 1v1m0 2v1m0 1v1m0 1v1m0 2v1m0 1v1m0 1v1m0 2v1m0 1v1m0 1v1m0 1v1m0 2v1m0 1v1m0 1v1m0 2v1m0 1v1m0 1v1m0 2v1m0 1v1m0 1v1m0 1v1m0 2v1m0 1v1m0 1v1m0 2v1m0 1v1m0 1v1m0 2v1m0 1v1m0 1v1m0 1v1m0 2v1m0 1v1m0 1v1m0 2v1m0 1v1m0 1v1m0 2v1m0 1v1m0 1v1m0 1v1m0 2v1m0 1v1m0 1v1m0 2v1M1104.5 526v1m0 1v1m0 2v1m0 1v1m0 1v1m0 1v1m0 2v1m0 1v1m0 1v1m0 2v1m0 1v1m0 1v1m0 2v1m0 1v1m0 1v1m0 1v1m0 2v1m0 1v1m0 1v1m0 2v1m0 1v1m0 1v1m0 2v1m0 1v1m0 1v1m0 1v1m0 2v1m0 1v1m0 1v1m0 2v1m0 1v1m0 1v1m0 2v1m0 1v1m0 1v1m0 1v1m0 2v1m0 1v1m0 1v1m0 2v1m0 1v1m0 1v1m0 2v1m0 1v1m0 1v1m0 1v1m0 2v1m0 1v1m0 1v1m0 2v1M1279.5 526v1m0 1v1m0 2v1m0 1v1m0 1v1m0 1v1m0 2v1m0 1v1m0 1v1m0 2v1m0 1v1m0 1v1m0 2v1m0 1v1m0 1v1m0 1v1m0 2v1m0 1v1m0 1v1m0 2v1m0 1v1m0 1v1m0 2v1m0 1v1m0 1v1m0 1v1m0 2v1m0 1v1m0 1v1m0 2v1m0 1v1m0 1v1m0 2v1m0 1v1m0 1v1m0 1v1m0 2v1m0 1v1m0 1v1m0 2v1m0 1v1m0 1v1m0 2v1m0 1v1m0 1v1m0 1v1m0 2v1m0 1v1m0 1v1m0 2v1M1454.5 526v1m0 1v1m0 2v1m0 1v1m0 1v1m0 1v1m0 2v1m0 1v1m0 1v1m0 2v1m0 1v1m0 1v1m0 2v1m0 1v1m0 1v1m0 1v1m0 2v1m0 1v1m0 1v1m0 2v1m0 1v1m0 1v1m0 2v1m0 1v1m0 1v1m0 1v1m0 2v1m0 1v1m0 1v1m0 2v1m0 1v1m0 1v1m0 2v1m0 1v1m0 1v1m0 1v1m0 2v1m0 1v1m0 1v1m0 2v1m0 1v1m0 1v1m0 2v1m0 1v1m0 1v1m0 1v1m0 2v1m0 1v1m0 1v1m0 2v1M1629.5 526v1m0 1v1m0 2v1m0 1v1m0 1v1m0 1v1m0 2v1m0 1v1m0 1v1m0 2v1m0 1v1m0 1v1m0 2v1m0 1v1m0 1v1m0 1v1m0 2v1m0 1v1m0 1v1m0 2v1m0 1v1m0 1v1m0 2v1m0 1v1m0 1v1m0 1v1m0 2v1m0 1v1m0 1v1m0 2v1m0 1v1m0 1v1m0 2v1m0 1v1m0 1v1m0 1v1m0 2v1m0 1v1m0 1v1m0 2v1m0 1v1m0 1v1m0 2v1m0 1v1m0 1v1m0 1v1m0 2v1m0 1v1m0 1v1m0 2v1M230.5 643v1m0 1v1m0 2v1m0 1v1m0 1v1m0 1v1m0 2v1m0 1v1m0 1v1m0 2v1m0 1v1m0 1v1m0 2v1m0 1v1m0 1v1m0 1v1m0 2v1m0 1v1m0 1v1m0 2v1m0 1v1m0 1v1m0 2v1m0 1v1m0 1v1m0 1v1m0 2v1m0 1v1m0 1v1m0 2v1m0 1v1m0 1v1m0 2v1m0 1v1m0 1v1m0 1v1m0 2v1m0 1v1m0 1v1m0 2v1m0 1v1m0 1v1m0 2v1m0 1v1m0 1v1m0 1v1m0 2v1m0 1v1m0 1v1m0 2v1M405.5 643v1m0 1v1m0 2v1m0 1v1m0 1v1m0 1v1m0 2v1m0 1v1m0 1v1m0 2v1m0 1v1m0 1v1m0 2v1m0 1v1m0 1v1m0 1v1m0 2v1m0 1v1m0 1v1m0 2v1m0 1v1m0 1v1m0 2v1m0 1v1m0 1v1m0 1v1m0 2v1m0 1v1m0 1v1m0 2v1m0 1v1m0 1v1m0 2v1m0 1v1m0 1v1m0 1v1m0 2v1m0 1v1m0 1v1m0 2v1m0 1v1m0 1v1m0 2v1m0 1v1m0 1v1m0 1v1m0 2v1m0 1v1m0 1v1m0 2v1M580.5 643v1m0 1v1m0 2v1m0 1v1m0 1v1m0 1v1m0 2v1m0 1v1m0 1v1m0 2v1m0 1v1m0 1v1m0 2v1m0 1v1m0 1v1m0 1v1m0 2v1m0 1v1m0 1v1m0 2v1m0 1v1m0 1v1m0 2v1m0 1v1m0 1v1m0 1v1m0 2v1m0 1v1m0 1v1m0 2v1m0 1v1m0 1v1m0 2v1m0 1v1m0 1v1m0 1v1m0 2v1m0 1v1m0 1v1m0 2v1m0 1v1m0 1v1m0 2v1m0 1v1m0 1v1m0 1v1m0 2v1m0 1v1m0 1v1m0 2v1M755.5 643v1m0 1v1m0 2v1m0 1v1m0 1v1m0 1v1m0 2v1m0 1v1m0 1v1m0 2v1m0 1v1m0 1v1m0 2v1m0 1v1m0 1v1m0 1v1m0 2v1m0 1v1m0 1v1m0 2v1m0 1v1m0 1v1m0 2v1m0 1v1m0 1v1m0 1v1m0 2v1m0 1v1m0 1v1m0 2v1m0 1v1m0 1v1m0 2v1m0 1v1m0 1v1m0 1v1m0 2v1m0 1v1m0 1v1m0 2v1m0 1v1m0 1v1m0 2v1m0 1v1m0 1v1m0 1v1m0 2v1m0 1v1m0 1v1m0 2v1M929.5 643v1m0 1v1m0 2v1m0 1v1m0 1v1m0 1v1m0 2v1m0 1v1m0 1v1m0 2v1m0 1v1m0 1v1m0 2v1m0 1v1m0 1v1m0 1v1m0 2v1m0 1v1m0 1v1m0 2v1m0 1v1m0 1v1m0 2v1m0 1v1m0 1v1m0 1v1m0 2v1m0 1v1m0 1v1m0 2v1m0 1v1m0 1v1m0 2v1m0 1v1m0 1v1m0 1v1m0 2v1m0 1v1m0 1v1m0 2v1m0 1v1m0 1v1m0 2v1m0 1v1m0 1v1m0 1v1m0 2v1m0 1v1m0 1v1m0 2v1M1104.5 643v1m0 1v1m0 2v1m0 1v1m0 1v1m0 1v1m0 2v1m0 1v1m0 1v1m0 2v1m0 1v1m0 1v1m0 2v1m0 1v1m0 1v1m0 1v1m0 2v1m0 1v1m0 1v1m0 2v1m0 1v1m0 1v1m0 2v1m0 1v1m0 1v1m0 1v1m0 2v1m0 1v1m0 1v1m0 2v1m0 1v1m0 1v1m0 2v1m0 1v1m0 1v1m0 1v1m0 2v1m0 1v1m0 1v1m0 2v1m0 1v1m0 1v1m0 2v1m0 1v1m0 1v1m0 1v1m0 2v1m0 1v1m0 1v1m0 2v1M1279.5 643v1m0 1v1m0 2v1m0 1v1m0 1v1m0 1v1m0 2v1m0 1v1m0 1v1m0 2v1m0 1v1m0 1v1m0 2v1m0 1v1m0 1v1m0 1v1m0 2v1m0 1v1m0 1v1m0 2v1m0 1v1m0 1v1m0 2v1m0 1v1m0 1v1m0 1v1m0 2v1m0 1v1m0 1v1m0 2v1m0 1v1m0 1v1m0 2v1m0 1v1m0 1v1m0 1v1m0 2v1m0 1v1m0 1v1m0 2v1m0 1v1m0 1v1m0 2v1m0 1v1m0 1v1m0 1v1m0 2v1m0 1v1m0 1v1m0 2v1M1454.5 643v1m0 1v1m0 2v1m0 1v1m0 1v1m0 1v1m0 2v1m0 1v1m0 1v1m0 2v1m0 1v1m0 1v1m0 2v1m0 1v1m0 1v1m0 1v1m0 2v1m0 1v1m0 1v1m0 2v1m0 1v1m0 1v1m0 2v1m0 1v1m0 1v1m0 1v1m0 2v1m0 1v1m0 1v1m0 2v1m0 1v1m0 1v1m0 2v1m0 1v1m0 1v1m0 1v1m0 2v1m0 1v1m0 1v1m0 2v1m0 1v1m0 1v1m0 2v1m0 1v1m0 1v1m0 1v1m0 2v1m0 1v1m0 1v1m0 2v1M1629.5 643v1m0 1v1m0 2v1m0 1v1m0 1v1m0 1v1m0 2v1m0 1v1m0 1v1m0 2v1m0 1v1m0 1v1m0 2v1m0 1v1m0 1v1m0 1v1m0 2v1m0 1v1m0 1v1m0 2v1m0 1v1m0 1v1m0 2v1m0 1v1m0 1v1m0 1v1m0 2v1m0 1v1m0 1v1m0 2v1m0 1v1m0 1v1m0 2v1m0 1v1m0 1v1m0 1v1m0 2v1m0 1v1m0 1v1m0 2v1m0 1v1m0 1v1m0 2v1m0 1v1m0 1v1m0 1v1m0 2v1m0 1v1m0 1v1m0 2v1M230.5 760v1m0 1v1m0 2v1m0 1v1m0 1v1m0 1v1m0 2v1m0 1v1m0 1v1m0 2v1m0 1v1m0 1v1m0 2v1m0 1v1m0 1v1m0 1v1m0 2v1m0 1v1m0 1v1m0 2v1m0 1v1m0 1v1m0 2v1m0 1v1m0 1v1m0 1v1m0 2v1m0 1v1m0 1v1m0 2v1m0 1v1m0 1v1m0 2v1m0 1v1m0 1v1m0 1v1m0 2v1m0 1v1m0 1v1m0 2v1m0 1v1m0 1v1m0 2v1m0 1v1m0 1v1m0 1v1m0 2v1m0 1v1m0 1v1m0 2v1M405.5 760v1m0 1v1m0 2v1m0 1v1m0 1v1m0 1v1m0 2v1m0 1v1m0 1v1m0 2v1m0 1v1m0 1v1m0 2v1m0 1v1m0 1v1m0 1v1m0 2v1m0 1v1m0 1v1m0 2v1m0 1v1m0 1v1m0 2v1m0 1v1m0 1v1m0 1v1m0 2v1m0 1v1m0 1v1m0 2v1m0 1v1m0 1v1m0 2v1m0 1v1m0 1v1m0 1v1m0 2v1m0 1v1m0 1v1m0 2v1m0 1v1m0 1v1m0 2v1m0 1v1m0 1v1m0 1v1m0 2v1m0 1v1m0 1v1m0 2v1M580.5 760v1m0 1v1m0 2v1m0 1v1m0 1v1m0 1v1m0 2v1m0 1v1m0 1v1m0 2v1m0 1v1m0 1v1m0 2v1m0 1v1m0 1v1m0 1v1m0 2v1m0 1v1m0 1v1m0 2v1m0 1v1m0 1v1m0 2v1m0 1v1m0 1v1m0 1v1m0 2v1m0 1v1m0 1v1m0 2v1m0 1v1m0 1v1m0 2v1m0 1v1m0 1v1m0 1v1m0 2v1m0 1v1m0 1v1m0 2v1m0 1v1m0 1v1m0 2v1m0 1v1m0 1v1m0 1v1m0 2v1m0 1v1m0 1v1m0 2v1M755.5 760v1m0 1v1m0 2v1m0 1v1m0 1v1m0 1v1m0 2v1m0 1v1m0 1v1m0 2v1m0 1v1m0 1v1m0 2v1m0 1v1m0 1v1m0 1v1m0 2v1m0 1v1m0 1v1m0 2v1m0 1v1m0 1v1m0 2v1m0 1v1m0 1v1m0 1v1m0 2v1m0 1v1m0 1v1m0 2v1m0 1v1m0 1v1m0 2v1m0 1v1m0 1v1m0 1v1m0 2v1m0 1v1m0 1v1m0 2v1m0 1v1m0 1v1m0 2v1m0 1v1m0 1v1m0 1v1m0 2v1m0 1v1m0 1v1m0 2v1M929.5 760v1m0 1v1m0 2v1m0 1v1m0 1v1m0 1v1m0 2v1m0 1v1m0 1v1m0 2v1m0 1v1m0 1v1m0 2v1m0 1v1m0 1v1m0 1v1m0 2v1m0 1v1m0 1v1m0 2v1m0 1v1m0 1v1m0 2v1m0 1v1m0 1v1m0 1v1m0 2v1m0 1v1m0 1v1m0 2v1m0 1v1m0 1v1m0 2v1m0 1v1m0 1v1m0 1v1m0 2v1m0 1v1m0 1v1m0 2v1m0 1v1m0 1v1m0 2v1m0 1v1m0 1v1m0 1v1m0 2v1m0 1v1m0 1v1m0 2v1M1104.5 760v1m0 1v1m0 2v1m0 1v1m0 1v1m0 1v1m0 2v1m0 1v1m0 1v1m0 2v1m0 1v1m0 1v1m0 2v1m0 1v1m0 1v1m0 1v1m0 2v1m0 1v1m0 1v1m0 2v1m0 1v1m0 1v1m0 2v1m0 1v1m0 1v1m0 1v1m0 2v1m0 1v1m0 1v1m0 2v1m0 1v1m0 1v1m0 2v1m0 1v1m0 1v1m0 1v1m0 2v1m0 1v1m0 1v1m0 2v1m0 1v1m0 1v1m0 2v1m0 1v1m0 1v1m0 1v1m0 2v1m0 1v1m0 1v1m0 2v1M1279.5 760v1m0 1v1m0 2v1m0 1v1m0 1v1m0 1v1m0 2v1m0 1v1m0 1v1m0 2v1m0 1v1m0 1v1m0 2v1m0 1v1m0 1v1m0 1v1m0 2v1m0 1v1m0 1v1m0 2v1m0 1v1m0 1v1m0 2v1m0 1v1m0 1v1m0 1v1m0 2v1m0 1v1m0 1v1m0 2v1m0 1v1m0 1v1m0 2v1m0 1v1m0 1v1m0 1v1m0 2v1m0 1v1m0 1v1m0 2v1m0 1v1m0 1v1m0 2v1m0 1v1m0 1v1m0 1v1m0 2v1m0 1v1m0 1v1m0 2v1M1454.5 760v1m0 1v1m0 2v1m0 1v1m0 1v1m0 1v1m0 2v1m0 1v1m0 1v1m0 2v1m0 1v1m0 1v1m0 2v1m0 1v1m0 1v1m0 1v1m0 2v1m0 1v1m0 1v1m0 2v1m0 1v1m0 1v1m0 2v1m0 1v1m0 1v1m0 1v1m0 2v1m0 1v1m0 1v1m0 2v1m0 1v1m0 1v1m0 2v1m0 1v1m0 1v1m0 1v1m0 2v1m0 1v1m0 1v1m0 2v1m0 1v1m0 1v1m0 2v1m0 1v1m0 1v1m0 1v1m0 2v1m0 1v1m0 1v1m0 2v1M1629.5 760v1m0 1v1m0 2v1m0 1v1m0 1v1m0 1v1m0 2v1m0 1v1m0 1v1m0 2v1m0 1v1m0 1v1m0 2v1m0 1v1m0 1v1m0 1v1m0 2v1m0 1v1m0 1v1m0 2v1m0 1v1m0 1v1m0 2v1m0 1v1m0 1v1m0 1v1m0 2v1m0 1v1m0 1v1m0 2v1m0 1v1m0 1v1m0 2v1m0 1v1m0 1v1m0 1v1m0 2v1m0 1v1m0 1v1m0 2v1m0 1v1m0 1v1m0 2v1m0 1v1m0 1v1m0 1v1m0 2v1m0 1v1m0 1v1m0 2v1M230.5 877v1m0 1v1m0 2v1m0 1v1m0 1v1m0 1v1m0 2v1m0 1v1m0 1v1m0 2v1m0 1v1m0 1v1m0 2v1m0 1v1m0 1v1m0 1v1m0 2v1m0 1v1m0 1v1m0 2v1m0 1v1m0 1v1m0 2v1m0 1v1m0 1v1m0 1v1m0 2v1m0 1v1m0 1v1m0 2v1m0 1v1m0 1v1m0 2v1m0 1v1m0 1v1m0 1v1m0 2v1m0 1v1m0 1v1m0 2v1m0 1v1m0 1v1m0 2v1m0 1v1m0 1v1m0 1v1m0 2v1m0 1v1m0 1v1m0 2v1m0 1v1M405.5 877v1m0 1v1m0 2v1m0 1v1m0 1v1m0 1v1m0 2v1m0 1v1m0 1v1m0 2v1m0 1v1m0 1v1m0 2v1m0 1v1m0 1v1m0 1v1m0 2v1m0 1v1m0 1v1m0 2v1m0 1v1m0 1v1m0 2v1m0 1v1m0 1v1m0 1v1m0 2v1m0 1v1m0 1v1m0 2v1m0 1v1m0 1v1m0 2v1m0 1v1m0 1v1m0 1v1m0 2v1m0 1v1m0 1v1m0 2v1m0 1v1m0 1v1m0 2v1m0 1v1m0 1v1m0 1v1m0 2v1m0 1v1m0 1v1m0 2v1m0 1v1M580.5 877v1m0 1v1m0 2v1m0 1v1m0 1v1m0 1v1m0 2v1m0 1v1m0 1v1m0 2v1m0 1v1m0 1v1m0 2v1m0 1v1m0 1v1m0 1v1m0 2v1m0 1v1m0 1v1m0 2v1m0 1v1m0 1v1m0 2v1m0 1v1m0 1v1m0 1v1m0 2v1m0 1v1m0 1v1m0 2v1m0 1v1m0 1v1m0 2v1m0 1v1m0 1v1m0 1v1m0 2v1m0 1v1m0 1v1m0 2v1m0 1v1m0 1v1m0 2v1m0 1v1m0 1v1m0 1v1m0 2v1m0 1v1m0 1v1m0 2v1m0 1v1M755.5 877v1m0 1v1m0 2v1m0 1v1m0 1v1m0 1v1m0 2v1m0 1v1m0 1v1m0 2v1m0 1v1m0 1v1m0 2v1m0 1v1m0 1v1m0 1v1m0 2v1m0 1v1m0 1v1m0 2v1m0 1v1m0 1v1m0 2v1m0 1v1m0 1v1m0 1v1m0 2v1m0 1v1m0 1v1m0 2v1m0 1v1m0 1v1m0 2v1m0 1v1m0 1v1m0 1v1m0 2v1m0 1v1m0 1v1m0 2v1m0 1v1m0 1v1m0 2v1m0 1v1m0 1v1m0 1v1m0 2v1m0 1v1m0 1v1m0 2v1m0 1v1M929.5 877v1m0 1v1m0 2v1m0 1v1m0 1v1m0 1v1m0 2v1m0 1v1m0 1v1m0 2v1m0 1v1m0 1v1m0 2v1m0 1v1m0 1v1m0 1v1m0 2v1m0 1v1m0 1v1m0 2v1m0 1v1m0 1v1m0 2v1m0 1v1m0 1v1m0 1v1m0 2v1m0 1v1m0 1v1m0 2v1m0 1v1m0 1v1m0 2v1m0 1v1m0 1v1m0 1v1m0 2v1m0 1v1m0 1v1m0 2v1m0 1v1m0 1v1m0 2v1m0 1v1m0 1v1m0 1v1m0 2v1m0 1v1m0 1v1m0 2v1m0 1v1M1104.5 877v1m0 1v1m0 2v1m0 1v1m0 1v1m0 1v1m0 2v1m0 1v1m0 1v1m0 2v1m0 1v1m0 1v1m0 2v1m0 1v1m0 1v1m0 1v1m0 2v1m0 1v1m0 1v1m0 2v1m0 1v1m0 1v1m0 2v1m0 1v1m0 1v1m0 1v1m0 2v1m0 1v1m0 1v1m0 2v1m0 1v1m0 1v1m0 2v1m0 1v1m0 1v1m0 1v1m0 2v1m0 1v1m0 1v1m0 2v1m0 1v1m0 1v1m0 2v1m0 1v1m0 1v1m0 1v1m0 2v1m0 1v1m0 1v1m0 2v1m0 1v1M1279.5 877v1m0 1v1m0 2v1m0 1v1m0 1v1m0 1v1m0 2v1m0 1v1m0 1v1m0 2v1m0 1v1m0 1v1m0 2v1m0 1v1m0 1v1m0 1v1m0 2v1m0 1v1m0 1v1m0 2v1m0 1v1m0 1v1m0 2v1m0 1v1m0 1v1m0 1v1m0 2v1m0 1v1m0 1v1m0 2v1m0 1v1m0 1v1m0 2v1m0 1v1m0 1v1m0 1v1m0 2v1m0 1v1m0 1v1m0 2v1m0 1v1m0 1v1m0 2v1m0 1v1m0 1v1m0 1v1m0 2v1m0 1v1m0 1v1m0 2v1m0 1v1M1454.5 877v1m0 1v1m0 2v1m0 1v1m0 1v1m0 1v1m0 2v1m0 1v1m0 1v1m0 2v1m0 1v1m0 1v1m0 2v1m0 1v1m0 1v1m0 1v1m0 2v1m0 1v1m0 1v1m0 2v1m0 1v1m0 1v1m0 2v1m0 1v1m0 1v1m0 1v1m0 2v1m0 1v1m0 1v1m0 2v1m0 1v1m0 1v1m0 2v1m0 1v1m0 1v1m0 1v1m0 2v1m0 1v1m0 1v1m0 2v1m0 1v1m0 1v1m0 2v1m0 1v1m0 1v1m0 1v1m0 2v1m0 1v1m0 1v1m0 2v1m0 1v1M1629.5 877v1m0 1v1m0 2v1m0 1v1m0 1v1m0 1v1m0 2v1m0 1v1m0 1v1m0 2v1m0 1v1m0 1v1m0 2v1m0 1v1m0 1v1m0 1v1m0 2v1m0 1v1m0 1v1m0 2v1m0 1v1m0 1v1m0 2v1m0 1v1m0 1v1m0 1v1m0 2v1m0 1v1m0 1v1m0 2v1m0 1v1m0 1v1m0 2v1m0 1v1m0 1v1m0 1v1m0 2v1m0 1v1m0 1v1m0 2v1m0 1v1m0 1v1m0 2v1m0 1v1m0 1v1m0 1v1m0 2v1m0 1v1m0 1v1m0 2v1m0 1v1" stroke="#4a4a4a" stroke-width="1" fill="none" shape-rendering="crispEdges"/>
<rect x="3" y="173" width="1748" height="2" fill="#525252"/>
<rect x="3" y="290" width="1748" height="2" fill="#525252"/>
<rect x="3" y="407" width="1748" height="2" fill="#525252"/>
<rect x="3" y="524" width="1748" height="2" fill="#525252"/>
<rect x="3" y="641" width="1748" height="2" fill="#525252"/>
<rect x="3" y="758" width="1748" height="2" fill="#525252"/>
<rect x="3" y="875" width="1748" height="2" fill="#525252"/>
<path d="M55.5 59V993" stroke="#2a2a2a" stroke-width="1" stroke-dasharray="5 5" shape-rendering="crispEdges"/>
<defs>
<clipPath id="cl0"><rect x="3" y="57" width="1748" height="116"/></clipPath>
<clipPath id="cl1"><rect x="3" y="175" width="1748" height="115"/></clipPath>
<clipPath id="cl2"><rect x="3" y="292" width="1748" height="115"/></clipPath>
<clipPath id="cl3"><rect x="3" y="409" width="1748" height="115"/></clipPath>
<clipPath id="cl4"><rect x="3" y="526" width="1748" height="115"/></clipPath>
<clipPath id="cl5"><rect x="3" y="643" width="1748" height="115"/></clipPath>
<clipPath id="cl6"><rect x="3" y="760" width="1748" height="115"/></clipPath>
<clipPath id="cl7"><rect x="3" y="877" width="1748" height="116"/></clipPath>
</defs>
<g clip-path="url(#cl0)"><path d="M3 160.5H9V161.5H11V160.5H19V159.5H20V160.5H77V161.5H78V160.5H82V161.5H83V156.5H85V155.5H86V156.5H88V155.5H90V154.5H93V153.5H97V152.5H98V151.5H101V150.5H104V149.5H108V148.5H112V147.5H118V146.5H121V145.5H127V144.5H131V143.5H135V142.5H139V141.5H141V140.5H142V141.5H146V140.5H150V139.5H152V140.5H155V139.5H165V138.5H174V137.5H195V138.5H197V139.5H198V140.5H200V141.5H202V142.5H205V143.5H213V144.5H225V145.5H238V146.5H251V147.5H258V146.5H259V147.5H264V148.5H265V147.5H266V148.5H291V149.5H294V148.5H296V149.5H298V148.5H344V149.5H348V148.5H360V147.5H362V148.5H377V149.5H379V148.5H383V149.5H386V148.5H388V147.5H390V148.5H411V149.5H413V148.5H443V147.5H445V148.5H454V149.5H455V150.5H456V151.5H457V150.5H478V149.5H481V150.5H484V149.5H490V148.5H491V147.5H494V146.5H497V147.5H532V148.5H538V147.5H540V148.5H544V149.5H545V148.5H554V147.5H559V148.5H600V147.5H602V148.5H648V147.5H649V148.5H686V149.5H689V148.5H698V149.5H699V148.5H744V147.5H748V148.5H751V149.5H754V148.5H759V149.5H760V150.5H761V151.5H762V152.5H763V153.5H765V152.5H779V151.5H794V150.5H822V149.5H825V150.5H856V149.5H932V150.5H935V149.5H955V150.5H959V149.5H964V150.5H965V149.5H969V150.5H971V149.5H981V150.5H983V149.5H1038V150.5H1042V149.5H1062V150.5H1063V149.5H1085V150.5H1087V149.5H1088V150.5H1089V149.5H1104V150.5H1129V151.5H1133V150.5H1138V149.5H1139V150.5H1187V149.5H1189V150.5H1212V151.5H1214V150.5H1226V151.5H1227V150.5H1236V151.5H1238V150.5H1242V151.5H1246V150.5H1250V151.5H1271V152.5H1275V151.5H1276V150.5H1277V148.5H1279V149.5H1282V148.5H1285V149.5H1286V150.5H1292V149.5H1292" class="t c1"/><path d="M1292.4 149.2L1292.5 158.3L1293.3 155L1293.8 133.3L1294.4 131.7L1294.6 116.7L1295.4 115L1296.2 118.3L1296.7 110.8L1297.5 109.2L1297.6 104.6L1298.8 108.3L1300.4 103.8L1302 106.7L1302.9 112.9L1303.8 113.3L1304.6 106.7L1305.4 105.4L1306.3 107.5L1306.4 116.7L1307 110L1308.3 112L1308.8 108.3L1310.8 102.5L1312 104.2L1313.3 100.4L1314.6 98.8L1315.4 104.6L1315.8 100L1317 99.6L1318 95.8L1320 92.5L1320.8 90.4L1322.5 92.5L1323.3 91.7L1325.4 91.7L1327 95L1329.2 96.7L1330.8 101.2L1332.9 103.8L1335.8 110.8L1337.5 112.9L1340 120.8L1342.5 127.9L1345 135L1348.8 141.2L1355 147L1360.8 150L1364.2 151.2L1368.3 151.7L1371.2 152.5L1372.9 154.2L1378.3 154.6L1379.2 155.4L1381.2 155.4L1381.7 153.3L1382.5 154.6L1386.2 155.8L1387 156.2" class="t c1" stroke-linejoin="round"/><path d="M1387 156.5H1415V155.5H1419V156.5H1489V155.5H1490V156.5H1550V157.5H1571V158.5H1572V157.5H1621V158.5H1623V159.5H1624V158.5H1751" class="t c1"/></g>
<g clip-path="url(#cl1)"><path d="M55.4 220.5L56 181.3L57 218L58 216L59 219.5L60 213L61 219L62 217L63 220.4L81 220.4L82 214L83 228L84 216L85.4 240.8L86.5 214.5L87.5 227L88.5 216L89.5 225L90.5 217.5L91.5 224L92.5 219.5L93.5 222.5" class="t c2"/><path d="M93.5 222.5L97.5 222.5L101.5 222.5L105.5 222.5L109.5 222.5L113.5 222.5L117.5 222.5L121.5 222.5L125.5 223.7L129.5 223.4L133.5 223.4L137.5 223.5L141.5 223.6L145.5 223.6L149.5 223.7L153.5 223.7L157.5 223.8L161.5 223.8L165.5 223.9L169.5 223.9L173.5 224L177.5 224L181.5 224.1L185.5 224.1L189.5 224.2L193.5 224.3L197.5 224.3L201.5 224.4L205.5 224.4L209.5 224.5L213.5 224.5L217.5 224.6L221.5 224.6L225.5 224.7L229.5 224.7L233.5 224.8L237.5 224.9L241.5 224.9L245.5 225L249.5 225L253.5 225.1L257.5 225.1L261.5 225.2L265.5 225.2L269.5 225.3L273.5 225.3L277.5 224.6L281.5 225.4L285.5 225.5L289.5 225.6L293.5 225.6L297.5 225.7L301.5 225.7L305.5 225.8L309.5 225.9L313.5 225.9L317.5 226L321.5 226.1L325.5 226.2L329.5 226.2L333.5 226.3L337.5 226.4L341.5 226.5L345.5 226.5L349.5 226.6L353.5 226.7L357.5 226.8L361.5 226.8L365.5 227.1L369.5 227L373.5 227L377.5 227.1L381.5 227.2L385.5 227.3L389.5 227.3L393.5 227.4L397.5 227.5L401.5 227.6L405.5 227.6L409.5 227.7L413.5 227.8L417.5 227.8L421.5 227.9L425.5 228L429.5 228.1L433.5 228.1L437.5 228.2L441.5 228.3L445.5 228.4L449.5 228.4L453.5 228.5L457.5 228.6L461.5 228.7L465.5 228.7L469.5 228.8L473.5 228.9L477.5 228.9L481.5 229L485.5 229.1L489.5 229.2L493.5 229.2L497.5 229.3L501.5 229.5L505.5 229.5L509.5 229.5L513.5 229.6L517.5 229.7L521.5 229.7L525.5 229.8L529.5 229.9L533.5 230L537.5 230L541.5 230.1L545.5 230.2L549.5 230.3L553.5 230.3L557.5 230.4L561.5 230.5L565.5 230.6L569.5 230.6L573.5 230.7L577.5 230.8L581.5 230.8L585.5 230.9L589.5 231L593.5 231.1L597.5 231.1L601.5 231.2L605.5 231.3L609.5 231.4L613.5 231.4L617.5 231.5L621.5 231.6L625.5 231.6L629.5 231.7L633.5 231.8L637.5 231.9L641.5 231.9L645.5 232L649.5 232.1L653.5 232.2L657.5 231.7L661.5 231.7L665.5 232.4L669.5 232.5L673.5 232.5L677.5 232.6L681.5 232.7L685.5 232.7L689.5 232.8L693.5 232.9L697.5 233L701.5 233L705.5 233.1L709.5 233.2L713.5 233.3L717.5 233.3L721.5 233.4L725.5 233.5L729.5 233.5L733.5 233.6L737.5 233.7L741.5 233.8L745.5 233.8L749.5 233.9L753.5 234L757.5 234.1L761.5 234.1L765.5 234.2L769.5 234.3L773.5 234.4L777.5 234.4L781.5 234.5L785.5 235.3L789.5 234.6L793.5 234.7L797.5 234.8L801.5 234.9L805.5 234.9L809.5 235L813.5 235.1L817.5 235.2L821.5 235.2L825.5 235.3L829.5 235.4L833.5 235.5L837.5 235.5L841.5 235.6L845.5 235.7L849.5 235.8L853.5 235.9L857.5 235.9L861.5 236L865.5 236.1L869.5 236.2L873.5 236.3L877.5 236.3L881.5 236.4L885.5 236.5L889.5 236.6L893.5 236.7L897.5 236.8L901.5 236.8L905.5 236.9L909.5 237L913.5 237.1L917.5 237.1L921.5 237.2L925.5 237.3L929.5 237.4L933.5 237.5L937.5 237.5L941.5 237.6L945.5 237.7L949.5 237.8L953.5 237.9L957.5 237.9L961.5 238L965.5 238.1L969.5 238.2L973.5 238.3L977.5 238.3L981.5 238.4L985.5 238.5L989.5 238.6L993.5 238.7L997.5 238.8L1001.5 238.8L1005.5 238.9L1009.5 239L1013.5 239.1L1017.5 239.1L1021.5 239.2L1025.5 239.3L1029.5 239.4L1033.5 239.5L1037.5 239.5L1041.5 239.6L1045.5 239.7L1049.5 239.8L1053.5 239.9L1057.5 239.9L1061.5 240L1065.5 240.1L1069.5 240.2L1073.5 240.3L1077.5 240.3L1081.5 240.4L1085.5 240.5L1089.5 240.6L1093.5 240.7L1097.5 240.8L1101.5 240.8L1105.5 240.9L1109.5 241L1113.5 241.1L1117.5 241.2L1121.5 241.2L1125.5 241.3L1129.5 241.4L1133.5 241.5L1137.5 241.5L1141.5 241L1145.5 241.1L1149.5 241.8L1153.5 241.9L1157.5 241.9L1161.5 242L1165.5 242.1L1169.5 242.2L1173.5 242.3L1177.5 242.3L1181.5 242.4L1185.5 242.5L1189.5 242.6L1193.5 242.7L1197.5 242.8L1201.5 242.8L1205.5 242.9L1209.5 243L1213.5 243.1L1217.5 243.2L1221.5 243.2L1225.5 243.3L1229.5 243.4L1233.5 243.5L1237.5 243.5L1241.5 243.6L1245.5 243.7L1249.5 243.8L1253.5 243.9L1257.5 243.9L1261.5 244L1265.5 244.1L1269.5 244.2L1273.5 244.3L1277.5 244.3L1281.5 244.4L1285.5 244.5L1289.5 244.6L1290.5 244.6" class="t c2" style="stroke-width:1.3"/><path d="M194 225.2h8M266 226.3h9M341 227.5h15M413 228.9h14M471 229.9h4M525 230.9h16M565 231.6h14M593 232.2h6M625 232.7h9M680 233.7h7M729 234.6h12M760 235.2h13M800 235.9h4M871 237.3h7M922 238.3h8M958 239.1h16M1007 240.0h6M1080 241.5h16M1109 242.1h6M1173 243.4h13M1226 244.4h6M1259 245.1h4M1284 245.5h7M1436 248.2h9M1473 248.7h12M1541 249.7h14M1579 250.2h6M1648 251.2h7M1697 251.8h8M1723 252.2h9M1774 252.6h6" class="t c2" style="stroke-width:1"/><path d="M1291 244.6L1291.7 244.5L1292.5 241L1293 247.5L1294 236L1294.5 250L1295.2 231L1295.8 249L1296.5 228.3L1297 252L1297.5 255.8L1298 233L1298.5 250L1299 240L1299.8 245" class="t c2" style="stroke-width:1.8"/><path d="M1299.8 245L1303.8 245.1L1307.8 245.1L1311.8 245.2L1315.8 245.3L1319.8 245.3L1323.8 245.4L1327.8 245.5L1331.8 245.5L1335.8 245.6L1339.8 245.6L1343.8 245.7L1347.8 245.8L1351.8 245.8L1355.8 245.9L1359.8 246L1363.8 246L1367.8 246.1L1371.8 246.2L1375.8 246.2L1379.8 246.3L1383.8 246.4L1387.8 246.4L1391.8 246.5L1395.8 246.5L1399.8 246.6L1403.8 246.6L1407.8 246.7L1411.8 246.8L1415.8 246.8L1419.8 246.9L1423.8 246.9L1427.8 247L1431.8 247L1435.8 247.1L1439.8 247.2L1443.8 247.2L1447.8 247.3L1451.8 247.3L1455.8 247.4L1459.8 247.4L1463.8 247.5L1467.8 247.5L1471.8 247.6L1475.8 247.7L1479.8 247.7L1483.8 247.8L1487.8 247.8L1491.8 247.9L1495.8 247.9L1499.8 248L1503.8 248L1507.8 248.1L1511.8 248.2L1515.8 248.2L1519.8 248.3L1523.8 248.3L1527.8 248.4L1531.8 248.4L1535.8 248.5L1539.8 248.5L1543.8 248.6L1547.8 248.7L1551.8 248.7L1555.8 248.8L1559.8 248.8L1563.8 248.9L1567.8 248.9L1571.8 249L1575.8 249.6L1579.8 249.1L1583.8 249.2L1587.8 249.2L1591.8 249.3L1595.8 249.3L1599.8 249.4L1603.8 249.4L1607.8 249.5L1611.8 249.6L1615.8 249.6L1619.8 249.7L1623.8 249.7L1627.8 249.8L1631.8 249.8L1635.8 249.9L1639.8 249.9L1643.8 250L1647.8 250.1L1651.8 250.1L1655.8 250.2L1659.8 250.2L1663.8 250.3L1667.8 250.3L1671.8 250.4L1675.8 250.4L1679.8 250.5L1683.8 250.6L1687.8 250.6L1691.8 250.7L1695.8 250.7L1699.8 250.8L1703.8 250.8L1707.8 250.9L1711.8 251L1715.8 251L1719.8 250.3L1723.8 250.3L1727.8 251.2L1731.8 251.2L1735.8 251.3L1739.8 251.3L1743.8 251.4L1747.8 251.5L1750.8 251.5" class="t c2" style="stroke-width:1.3"/><path d="M1031.3 234.5V247M1311.4 237V249.6M1321.5 242V249.6M1340.3 241.3V246.7M1341.3 241.3V246.7M1347.5 240V247.5M1364.4 241.3V247.5M1394.6 235V248.3M1304 243V246.5M1331 243.5V246.5M1352 244V247" class="t c2"/></g>
<g clip-path="url(#cl2)"><path d="M42 349.5H58V350.5H197V351.5H450" class="t c3" style="stroke-width:1.25"/><path d="M450 351.75H452V352.75H455V351.75H463V352.75H464V351.75H474V351.25H477V352.75H479V351.75H484V352.75H486V351.75H488V351.25H491V351.75H498V352.75H500V351.75H501V351.25H503V351.75H512V352.25H513V351.75H515V350.75H517V351.75H522V352.25H523V351.25H525V351.75H526V352.25H529V351.75H531V352.75H534V352.25H537V351.75H539V352.75H541V351.75H548V352.25H551V351.75H553V352.75H555V351.75H568V351.25H569" class="t c3" style="stroke-width:1.6"/><path d="M569 351.25H571V351.75H579V352.75H581V351.25H582V351.75H587V352.25H590V351.75H606V352.75H608V351.75H622V351.25H624V351.75H636V352.25H637V351.75H643V352.25H645V351.75H649V350.75H650V351.75H653V352.75H654V351.75H657V352.25H660V351.75H661V351.25H664V351.75H667V351.25H669V351.75H672V351.25H674V351.75H678V352.75H680V351.75H695V350.75H697V351.75H702V352.75H704V351.75H708V350.75H711V351.75H725V351.25H726V351.75H730V350.75H731V351.75H752V351.25H754V351.75H759V350.75H760V351.75H761V350.75H763V352.25H765V350.75H767V350.25H769V351.75H775V352.25H776V352.75H778V352.25H781V351.75H790V352.75H792V351.75H800V351.25H802V351.75H808V352.75H810V351.75H812V350.75H815V351.25H816V351.75H819V351.25H822V350.75H825V351.25H830V351.75H833V351.25H847V350.75H850V351.25H858V352.25H861V349.75H862V351.75H863V352.75H864V351.25H868V350.75H870V351.25H879V352.25H880V351.25H881V350.25H883V351.25H885V350.75H888V352.75H891V350.75H892V350.25H894V351.25H900V352.25H901V351.25H903V350.25H906V351.25H924V350.75H927V351.25H937V352.75H939V351.25H949V352.25H950V351.25H955V350.75H958V351.25H966V349.75H968V351.25H969V349.75H971V351.25H979V350.25H980V349.75H981V350.25H984V351.25H1001V350.75H1002V352.25H1005V350.75H1018V349.25H1019V351.75H1020V350.75H1022V349.25H1025V351.25H1028V350.75H1064V349.75H1067V350.75H1069V350.25H1071V350.75H1080V349.75H1082V350.75H1091V351.25H1093V350.75H1109V352.75H1111V352.25H1112V351.25H1114V350.75H1122V350.25H1125V352.25H1128V350.75H1133V349.75H1134V352.25H1137V350.25H1139V348.75H1142V350.75H1143V350.25H1146V351.75H1149V350.25H1159V352.25H1161V350.25H1163V348.75H1164V349.75H1165V350.25H1167V351.25H1168V350.25H1184V348.75H1185V351.25H1186V349.75H1187V350.25H1189V351.25H1191V350.25H1193V348.75H1194V350.25H1201V352.25H1202V350.25H1207V351.25H1209V350.25H1214V349.25H1217V350.25H1220V351.75H1222V350.25H1232V349.25H1234V351.25H1235V350.25H1237V348.75H1242V350.25H1248V351.25H1249V350.25H1266V348.75H1267V348.25H1271V349.75H1281V350.75H1283V349.75H1288V348.75H1289V349.75H1292" class="t c3" style="stroke-width:2"/><path d="M54.9 352L55.1 297.3L56.6 308L57.8 325L59.2 340L60.8 350L59.4 362L58.4 378L57.6 395.8L56.5 390L55.6 372L54.9 352Z" class="f c3f"/><path d="M82 350L82.3 368.7L83.2 361L83.8 366L84.6 358L85.5 362L86.5 355L88 357L89 353L91 352L91 349.5L82 349.5Z" class="f c3f"/><path d="M1292 349.2L1293 318.8L1294.6 316.8L1295 321.3L1297 321.3L1297.5 315.9L1298 324.7L1300 328L1303.3 327.2L1306.2 324.2L1310.8 322.2L1313 319.2L1315.4 313L1315.8 318.8L1317.5 313L1320 309.7L1324.2 305.5L1327.5 300.5L1329.6 294.2L1331.7 295.5L1334.2 291.8L1336.7 291.3L1338.5 294.7L1341 302.2L1343.5 311.3L1346 320.5L1348.5 328L1351 333.8L1353.5 338L1357.7 342.6L1361.9 345L1366 346.8L1372.5 348L1378.3 348.4L1393.3 348.6L1393.3 349.9L1378.3 349.6L1372.5 349.1L1366 347.9L1361.7 346.2L1357.4 343.8L1353.2 339.2L1350.6 335L1348.1 329.2L1345.6 321.7L1343.1 312.5L1340.6 303.4L1338.1 295.9L1336.4 292.8L1335 293L1332.5 296.3L1330 298.8L1327.5 305.5L1325 309.7L1323.3 313.8L1320.8 316.3L1318.3 321.3L1317.5 328.8L1315.8 327.2L1315.4 333L1313.3 333.8L1311.7 335.5L1309.2 336.3L1307 339.7L1306.4 346.3L1305.8 338L1303.3 339.7L1302.5 345.5L1301.7 337.2L1299.2 335.5L1298 341.3L1297 348.8L1295 349.7L1294.2 353L1293.3 368L1292.5 374.7L1292 351.3Z" class="f c3f" style="stroke:#e0294d;stroke-width:0.9;stroke-linejoin:round"/><path d="M1393 349.6L1751 349.6" class="t c3" style="stroke-width:1.3"/><path d="M1393.8 343.9L1399.4 349.3L1393.8 354.5Z" class="f c3f"/><path d="M1031.7 347V354.5M1032.7 348V353.5M1006.5 349V352.8M1232.5 349V353.8M1214 348.5V353M1271.5 348V352.5M1276 347.3V352.6M1288 348V353M607 351.2V352.0M620 351.3V352.4M633 351.8V352.7M641 351.2V352.0M656 351.3V352.8M667 351.3V352.8M674 351.0V352.9M686 351.3V351.8M702 351.7V352.8M715 351.7V352.8M723 351.1V352.7M733 350.7V353.0M743 350.7V352.5M749 350.4V351.8M755 350.9V352.0M769 351.0V352.5M777 351.0V352.8M790 351.0V352.5M803 351.2V352.1M807 350.2V353.1M821 350.4V352.6M830 349.9V352.9M843 351.2V352.5M857 350.0V352.4M865 351.1V352.2M879 349.6V351.5M895 351.2V352.9M899 350.7V352.7M904 351.2V352.4M908 350.5V352.3M920 349.6V353.1M932 350.7V351.3M936 351.0V352.3M940 349.3V353.0M948 349.9V351.4M952 349.2V351.8M961 349.2V352.9M971 350.3V352.8M981 349.7V352.3M993 350.8V353.1M1009 349.9V351.9M1014 348.9V351.9M1020 349.8V352.1M1022 349.2V353.1M1029 350.9V352.2M1033 350.8V352.3M1042 350.1V352.9M1048 349.2V350.9M1050 348.7V350.9M1057 350.2V351.8M1064 350.4V351.2M1071 348.8V351.4M1079 350.5V352.6M1083 350.0V351.2M1089 350.1V351.1M1097 349.1V350.9M1104 348.4V352.3M1109 349.6V352.7M1113 350.4V352.4M1118 348.4V351.7M1123 348.6V350.7M1128 349.8V352.6M1132 348.4V351.4M1135 348.5V351.4M1139 349.5V351.8M1145 349.3V352.1M1151 349.4V351.5M1159 350.0V350.5M1167 349.0V352.9M1172 350.3V351.6M1178 349.0V352.7M1181 348.1V352.9M1184 348.2V350.5M1189 348.0V352.7M1191 350.3V352.3M1195 349.0V351.0M1197 348.9V351.4M1200 349.4V351.0M1209 348.1V350.4M1214 349.7V351.7M1217 349.8V352.4M1221 348.0V350.2M1229 350.0V350.9M1235 348.4V351.6M1237 348.8V352.3M1239 347.8V352.3M1241 349.8V350.3M1243 347.7V350.4M1252 349.2V351.0M1259 349.0V351.1M1265 349.0V350.6M1272 348.8V350.3M1274 348.0V351.0M1277 348.4V350.1M1286 348.2V352.1M1294 348.1V350.0" class="t c3"/></g>
<g clip-path="url(#cl3)"><path d="M3 477.5H198V476.5H202V475.5H205V474.5H209V473.5H212V472.5H215V471.5H219V470.5H222V469.5H226V468.5H229V467.5H233V466.5H236V465.5H240V464.5H243V463.5H308V464.5H356V465.5H1113V466.5H1279V465.5H1293V463.5H1294V459.5H1299V458.5H1301V459.5H1305V460.5H1318V461.5H1327V462.5H1336V463.5H1339V464.5H1342V465.5H1345V466.5H1348V467.5H1351V468.5H1355V469.5H1359V470.5H1363V471.5H1367V472.5H1372V473.5H1380V474.5H1389V475.5H1403V476.5H1448V477.5H1751" class="t c4"/></g>
<g clip-path="url(#cl4)"><path d="M3 583.5L1751 583.5" class="t c5"/><path d="M283 582.5h2M330 582.5h2M398 582.5h2M455 582.5h2M512 582.5h2M590 582.5h2M640 582.5h2M700 582.5h2M770 582.5h2M820 582.5h2M905 582.5h2M960 582.5h2M1010 582.5h2M1080 582.5h2M1150 582.5h2M1210 582.5h2M1283 582.5h2M1310 582.5h2M1352 582.5h2M1357 582.5h2M1384 582.5h2M1396 582.5h2M1440 582.5h2M1444 582.5h2M1545 582.5h2M1571 582.5h2M1616 582.5h2M1625 582.5h2" class="t c5"/></g>
<g clip-path="url(#cl5)"><path d="M3 744.5L10 744.5L10.1 743.5L21.7 743.5L21.8 742.6L55.5 742.6L55.5 640L83.3 640" class="t c6" style="stroke-width:1"/><path d="M64 654L83.3 654L83.3 640L92 640L92.3 643L94.6 654L996.5 654L996.6 652L997.6 652L997.7 654L1294.6 654L1295.3 640L1301.2 640L1301.5 643L1305.2 654L1311.4 654L1311.4 640L1313.4 640L1313.5 643L1314.5 654L1394.5 654L1394.5 640L1395.5 640L1395.6 643L1397 654L1751 654" class="t c6" style="stroke-width:1.7" stroke-linejoin="miter"/><path d="M75 655.5h1M81 655.5h1M91 655.5h1M104 655.5h3M114 655.5h3M122 655.5h1M127 655.5h2M134 655.5h3M144 655.5h3M155 655.5h1M166 655.5h1M179 655.5h1M188 655.5h3M195 655.5h2M202 655.5h3M206 655.5h1M213 655.5h2M221 655.5h3M228 655.5h2M241 655.5h3M254 655.5h1M258 655.5h3M262 655.5h2M266 655.5h1M279 655.5h2M291 655.5h1M294 655.5h3M303 655.5h1M316 655.5h2M330 655.5h2M334 655.5h2M342 655.5h1M349 655.5h1M356 655.5h3M364 655.5h2M373 655.5h1M377 655.5h2M381 655.5h1M384 655.5h1M398 655.5h3M407 655.5h1M417 655.5h2M421 655.5h1M430 655.5h1M442 655.5h3M449 655.5h3M453 655.5h3M464 655.5h2M472 655.5h1M482 655.5h2M486 655.5h1M492 655.5h1M504 655.5h3M508 655.5h1M521 655.5h3M532 655.5h2M541 655.5h1M548 655.5h2M559 655.5h2M568 655.5h1M574 655.5h3M579 655.5h2M592 655.5h3M597 655.5h1M605 655.5h3M616 655.5h1M621 655.5h2M624 655.5h3M634 655.5h2M644 655.5h3M656 655.5h3M667 655.5h2M674 655.5h1M688 655.5h3M695 655.5h2M705 655.5h2M719 655.5h3M723 655.5h1M735 655.5h1M745 655.5h3M759 655.5h1M769 655.5h1M774 655.5h1M779 655.5h3M783 655.5h3M793 655.5h2M805 655.5h2M818 655.5h1M832 655.5h2M836 655.5h2M848 655.5h2M861 655.5h2M875 655.5h1M886 655.5h3M897 655.5h1M903 655.5h1M911 655.5h3M923 655.5h2M936 655.5h2M947 655.5h3M954 655.5h3M962 655.5h1M969 655.5h1M980 655.5h2M987 655.5h2M995 655.5h1M1002 655.5h3M1008 655.5h3M1011 655.5h1M1021 655.5h1M1028 655.5h2M1041 655.5h2M1050 655.5h3M1063 655.5h2M1071 655.5h3M1082 655.5h3M1090 655.5h3M1104 655.5h3M1107 655.5h1M1119 655.5h2M1132 655.5h1M1143 655.5h2M1153 655.5h2M1156 655.5h1M1167 655.5h1M1177 655.5h1M1191 655.5h1M1196 655.5h1M1207 655.5h1M1220 655.5h2M1233 655.5h1M1242 655.5h2M1255 655.5h1M1268 655.5h2M1271 655.5h1M1284 655.5h1M1296 655.5h1M1310 655.5h3M1318 655.5h2M1330 655.5h2M1336 655.5h3M1340 655.5h2M1351 655.5h3M1362 655.5h2M1375 655.5h3M1378 655.5h2M1389 655.5h1M1394 655.5h2M1397 655.5h2M1400 655.5h1M1406 655.5h1M1411 655.5h2M1421 655.5h2M1431 655.5h2M1442 655.5h1M1445 655.5h3M1457 655.5h3M1467 655.5h3M1479 655.5h3M1493 655.5h3M1499 655.5h1M1512 655.5h2M1523 655.5h1M1527 655.5h3M1535 655.5h1M1539 655.5h3M1547 655.5h1M1552 655.5h1M1561 655.5h1M1564 655.5h2M1567 655.5h2M1573 655.5h3M1582 655.5h2M1587 655.5h1M1596 655.5h3M1602 655.5h1M1607 655.5h2M1617 655.5h1M1626 655.5h1M1633 655.5h2M1644 655.5h1M1658 655.5h3M1671 655.5h2M1675 655.5h1M1684 655.5h2M1697 655.5h3M1708 655.5h3M1722 655.5h2M1736 655.5h1M1742 655.5h2M1754 655.5h2" class="t c6" style="stroke-width:1"/></g>
<g clip-path="url(#cl6)"><path d="M3 863.5H56V862.5H63V861.5H71V860.5H78V859.5H85V858.5H93V857.5H100V856.5H108V855.5H115V854.5H123V853.5H130V852.5H137V851.5H145V850.5H152V849.5H160V848.5H167V847.5H176V846.5H184V845.5H193V844.5H201V843.5H209V842.5H218V841.5H226V840.5H235V839.5H243V838.5H251V837.5H259V836.5H267V835.5H275V834.5H283V833.5H292V832.5H300V831.5H309V830.5H319V829.5H328V828.5H338V827.5H348V826.5H357V825.5H367V824.5H376V823.5H386V822.5H396V821.5H405V820.5H415V819.5H426V818.5H436V817.5H446V816.5H456V815.5H466V814.5H476V813.5H486V812.5H497V811.5H507V810.5H517V809.5H527V808.5H537V807.5H547V806.5H558V805.5H568V804.5H578V803.5H591V802.5H605V801.5H619V800.5H633V799.5H647V798.5H661V797.5H675V796.5H689V795.5H703V794.5H718V793.5H732V792.5H746V791.5H760V790.5H777V789.5H794V788.5H810V787.5H827V786.5H844V785.5H860V784.5H877V783.5H894V782.5H910V781.5H927V780.5H951V779.5H977V778.5H1002V777.5H1028V776.5H1054V775.5H1080V774.5H1105V773.5H1155V772.5H1205V771.5H1255V770.5H1290V769.5H1513V770.5H1583V772.5H1635V773.5H1748V774.5H1751" class="t m1"/></g>
<g clip-path="url(#cl7)"><path d="M3 959.6L20 959.3L40 958.8L55 958.5" class="t m2"/><path d="M55 959L55.6 947.5L56.3 995L57 955L58 960L59 954L60 959.5L61 955.5L62 959L63.5 956L65 958.5L67 956L69 958L71 956.5L73 957.8L75 956.2L77 957.5L79 956L81 957L82.3 956L82.5 945L83.2 995L84 962L84.6 980L85.3 964L86 977L86.8 966L87.5 973L88.2 968.5L89 971.5" class="t m2" style="stroke-width:1.3"/><path d="M89 971.25H90V970.25H93V969.25H94V968.75H95V969.25H97V968.75H99V968.25H101V967.75H103V966.75H104V966.25H105V967.25H106V966.75H107V967.75H109V966.25H111V965.75H112V966.25H114V965.25H117V964.75H120V964.25H121V963.75H123V964.25H124V963.75H125V962.75H131V962.25H135V961.75H139V961.25H143V960.75H145V959.75H146V960.75H147V960.25H149V959.75H151V960.75H153V959.75H158V959.25H161V958.75H164V959.75H165V959.25H167V958.25H171V957.75H175V956.75H177V957.25H178V957.75H182V956.25H185V955.75H188V956.25H190V955.75H191V955.25H192" class="t m2"/><path d="M192.5 955L194.4 951L196.2 943.8L197.5 935L198.8 928L201.7 915L205 905L210 893.3L215 883.3L220 877L223 870" class="t m2"/><path d="M1344.5 870L1345.4 876.8L1346.2 883L1347.5 888.8L1349.1 894.6L1350.7 899.8L1352.7 904.3L1354.6 908.9L1356.6 913.1L1359.8 916.7L1363 919.9L1366.3 921.2L1367.6 922.2L1371.2 922.2L1371.5 916.7L1372.4 913.4L1381.5 913.4L1381.5 924.8L1381.8 917.6L1385.4 917.6L1386.4 914.7L1387 910.5L1388 912.8L1394.2 914L1404.5 915L1414.2 915.4L1414.2 924.4L1416.8 922.8L1420.7 921.8L1425.9 920.9" class="t m2" stroke-linejoin="round"/><path d="M1425.9 920.75H1426.9V921.25H1429.9V920.75H1438.9V921.75H1441.9V921.25H1443.9V920.75H1453.9V920.25H1476.9V919.75H1479.9V919.25H1480.9V919.75H1482.9V919.25H1485.9V919.75H1493.9V920.25H1495.9V919.25H1502.9V918.75H1503.9V919.25H1506.9V918.75H1509.9V918.25H1511.9V918.75H1519.9V918.25H1521.9V917.75H1524.9V918.25H1527.9V917.75H1539.9V917.25H1540.9V916.75H1542.9V917.25H1543.9V916.75H1547.9V916.25H1548.9V910.25H1549.9V907.75H1550.9V908.25H1551.9V908.75H1552.9V909.25H1553.9V909.75H1554.9V909.25H1555.9V909.75H1556.9V910.75H1557.9V911.25H1559.9V911.75H1561.9V912.25H1562.9V911.75H1564.9V912.25H1565.9V912.75H1567.9V912.25H1570.9V913.25H1572.9V912.75H1573.9V912.25H1578.9V911.75H1580.9V912.25H1581.9V911.75H1586.9V911.25H1587.9V911.75H1594.9V911.25H1596.9V910.75H1606.9V910.25H1617.9V908.75H1618.9V907.75H1619.9V906.75H1620.9V905.25H1621.9V904.75H1622.9V905.25H1623.9V905.75H1624.9V906.75H1625.9V907.25H1626.9V907.75H1627.9V908.25H1628.9V908.75H1630.9V907.75H1631.9V908.75H1633.9V908.25H1644.9V907.75H1658.9V906.75H1659.9V907.25H1664.9V906.75H1674.9V906.25H1679.9V905.75H1683.9V906.25H1686.9V905.75H1687.9V905.25H1689.9V905.75H1690.9V905.25H1696.9V904.75H1698.9V904.25H1701.9V904.75H1704.9V905.25H1705.9V904.75H1706.9V904.25H1715.9V903.25H1717.9V904.25H1718.9V903.75H1728.9V903.25H1739.9V902.75H1740.9V903.25H1742.9V902.75H1747.9V903.25H1749.9V902.75H1750.9" class="t m2"/></g>
<path d="M3 161.5H1718" stroke="#3e3e3e" stroke-width="1.05" stroke-dasharray="5 5"/>
<path d="M3 246.5H1740" stroke="#3e3e3e" stroke-width="1.05" stroke-dasharray="5 5"/>
<path d="M3 349.5H1723" stroke="#3e3e3e" stroke-width="1.05" stroke-dasharray="5 5"/>
<path d="M3 478.5H1740" stroke="#3e3e3e" stroke-width="1.05" stroke-dasharray="5 5"/>
<path d="M3 583.5H1723" stroke="#3e3e3e" stroke-width="1.05" stroke-dasharray="5 5"/>
<path d="M3 863.5H1717" stroke="#3e3e3e" stroke-width="1.05" stroke-dasharray="5 5"/>
<path d="M3 980.5H1717" stroke="#3e3e3e" stroke-width="1.05" stroke-dasharray="5 5"/>
<path d="M45 57.5H65.6L55.3 67.9Z" fill="#f5891f"/><path d="M10.0 103.0H77L83.4 115.5L77 128.0H10.0Q7.0 128.0 7.0 125.0V106.0Q7.0 103.0 10.0 103.0Z" fill="#e8e8e8" stroke="#1c1c1c" stroke-width="2" stroke-linejoin="round"/><path d="M33 103.0V128.0" stroke="#1c1c1c" stroke-width="2"/><path d="M10.0 220.0H77L83.4 232.3L77 244.6H10.0Q7.0 244.6 7.0 241.6V223.0Q7.0 220.0 10.0 220.0Z" fill="#e6f9f9" stroke="#20c0c8" stroke-width="2" stroke-linejoin="round"/><path d="M33 220.0V244.6" stroke="#20c0c8" stroke-width="2"/><path d="M10.2 337.5H30.5L42 350L30.5 362.5H10.2Q6.7 362.5 6.7 359.0V341.0Q6.7 337.5 10.2 337.5Z" fill="#fdeaee" stroke="#f0788e" stroke-width="1.4" stroke-linejoin="round"/><path d="M10.0 454.0H77L83.4 466.25L77 478.5H10.0Q7.0 478.5 7.0 475.5V457.0Q7.0 454.0 10.0 454.0Z" fill="#f0f8e2" stroke="#84c225" stroke-width="2" stroke-linejoin="round"/><path d="M33 454.0V478.5" stroke="#84c225" stroke-width="2"/><path d="M10.2 571.5H30.5L42 584L30.5 596.5H10.2Q6.7 596.5 6.7 593.0V575.0Q6.7 571.5 10.2 571.5Z" fill="#fef1e2" stroke="#f7a850" stroke-width="1.4" stroke-linejoin="round"/><path d="M10.0 688.5H77L83.4 700.6L77 712.7H10.0Q7.0 712.7 7.0 709.7V691.5Q7.0 688.5 10.0 688.5Z" fill="#e8e8f8" stroke="#101010" stroke-width="2" stroke-linejoin="round"/><path d="M10.0 688.5H33V712.7H10.0Q7.0 712.7 7.0 709.7V691.5Q7.0 688.5 10.0 688.5Z" fill="#2626c0"/><path d="M10.0 688.5H77L83.4 700.6L77 712.7H10.0Q7.0 712.7 7.0 709.7V691.5Q7.0 688.5 10.0 688.5Z" fill="none" stroke="#101010" stroke-width="2" stroke-linejoin="round"/><path d="M33 688.5V712.7" stroke="#101010" stroke-width="2"/><g clip-path="url(#cl6)"><path d="M10.2 850.7H30.5L42 863.2L30.5 875.7H10.2Q6.7 875.7 6.7 872.2V854.2Q6.7 850.7 10.2 850.7Z" fill="#fef1e2" stroke="#f7a850" stroke-width="1.4" stroke-linejoin="round"/></g><g clip-path="url(#cl7)"><path d="M10.2 967.5H30.5L42 980L30.5 992.5H10.2Q6.7 992.5 6.7 989.0V971.0Q6.7 967.5 10.2 967.5Z" fill="#f1e8f6" stroke="#b890d0" stroke-width="1.4" stroke-linejoin="round"/></g><path d="M45 643H65V664H59.5L55.3 670.8L51 664H45Z" fill="#f5891f"/><path d="M47 645H63V661.2H59L55.3 665.2L51.5 661.2H47Z" fill="#000"/><path d="M50.4 648.2H59.8V650.5H56.3V659.2H53.9V650.5H50.4Z" fill="#f5891f"/><path d="M593 36.5H586.5V53H593M1161.5 36.5H1168V53H1161.5" fill="none" stroke="#f2f2f2" stroke-width="1.3"/><path d="M587 45H1168" stroke="#b4b4b4" stroke-width="1.6"/><path d="M596 33.3H611.4L603.7 38.6Z" fill="#f5891f"/><path d="M596.3 40H610.2V53H606.5L603.3 57L600 53H596.3Z" fill="#f5891f"/><path d="M598.2 41.8H608.3V51.3H605.5L603.3 53.7L601 51.3H598.2Z" fill="#000"/><path d="M600 43.7H606.6V45.5H604.3V50.4H602.3V45.5H600Z" fill="#f5891f"/>
</svg>
<div class="bt" style="left:-11.0px;width:60px;top:108.0px;color:#111;font-size:12px">C 1</div><div class="bt" style="left:27.5px;width:60px;top:108.0px;color:#111;font-size:12px">20 V</div><div class="bt" style="left:-10.8px;width:60px;top:225.0px;color:#111;font-size:12px">C 2</div><div class="bt" style="left:27.0px;width:60px;top:225.0px;color:#111;font-size:12px">300 mV</div><div class="bt" style="left:-6.7px;width:60px;top:343.0px;color:#ea5670;font-size:12px">C 3</div><div class="bt" style="left:-10.8px;width:60px;top:459.3px;color:#111;font-size:12px">C 4</div><div class="bt" style="left:27.0px;width:60px;top:459.3px;color:#111;font-size:12px">200 mV</div><div class="bt" style="left:-6.4px;width:60px;top:577.0px;color:#111;font-size:12px">C 5</div><div class="bt" style="left:-10.8px;width:60px;top:693.6px;color:#fff;font-size:12px">C 6</div><div class="bt" style="left:27.0px;width:60px;top:693.6px;color:#3a3ad0;font-size:12px">3 V</div><div class="bt" style="left:-6.7px;width:60px;top:856.3px;color:#111;font-size:12px">M 1</div><div class="bt" style="left:-6.3px;width:60px;top:972.3px;color:#8a4cb8;font-size:12px">M 2</div><div class="nm" style="left:101.2px;top:101.8px;color:#151515;letter-spacing:0.3px">U_loop,coil</div><div class="nm" style="left:101.2px;top:219.3px;color:#20c2ca;letter-spacing:0.0px">U_Bt,coil</div><div class="nm" style="left:52.8px;top:335.8px;color:#e22a4e;letter-spacing:-0.1px">U_Rog,coil</div><div class="nm" style="left:101.2px;top:453.3px;color:#7ec422;letter-spacing:0.0px">U_Photod</div><div class="nm" style="left:52.8px;top:570.2px;color:#f58c1e;letter-spacing:0.15px">U_Diamagn</div><div class="nm" style="left:100.6px;top:686.8px;color:#1c1cb8;letter-spacing:0.45px">Trigger</div><div class="nm" style="left:52.8px;top:847.0px;color:#ec851c;letter-spacing:-0.6px">B_t</div><div class="lb" style="top:85.4px;color:#111">30 V</div><div class="lb" style="top:108.4px;color:#111">20 V</div><div class="lb" style="top:131.4px;color:#111">10 V</div><div class="lb" style="top:154.4px;color:#111">0 V</div><div class="lb" style="top:181.5px;color:#1fb9c1">1.25 V</div><div class="lb" style="top:204.5px;color:#1fb9c1">750 mV</div><div class="lb" style="top:227.5px;color:#1fb9c1">250 mV</div><div class="lb" style="top:250.5px;color:#1fb9c1">-250 mV</div><div class="lb" style="top:273.5px;color:#1fb9c1">-750 mV</div><div class="lb" style="top:296.4px;color:#dc2849">1.80 V</div><div class="lb" style="top:319.4px;color:#dc2849">900 mV</div><div class="lb" style="top:342.4px;color:#dc2849">0 V</div><div class="lb" style="top:365.4px;color:#dc2849">-900 mV</div><div class="lb" style="top:388.4px;color:#dc2849">-1.80 V</div><div class="lb" style="top:413.4px;color:#7ab620">1 V</div><div class="lb" style="top:436.4px;color:#7ab620">600 mV</div><div class="lb" style="top:459.4px;color:#7ab620">200 mV</div><div class="lb" style="top:482.4px;color:#7ab620">-200 mV</div><div class="lb" style="top:505.4px;color:#7ab620">-600 mV</div><div class="lb" style="top:530.4px;color:#f28a1e">4 V</div><div class="lb" style="top:553.4px;color:#f28a1e">2 V</div><div class="lb" style="top:576.4px;color:#f28a1e">0 V</div><div class="lb" style="top:599.4px;color:#f28a1e">-2 V</div><div class="lb" style="top:622.4px;color:#f28a1e">-4 V</div><div class="lb" style="top:647.4px;color:#1c1cac">6 V</div><div class="lb" style="top:670.4px;color:#1c1cac">4.50 V</div><div class="lb" style="top:693.4px;color:#1c1cac">3 V</div><div class="lb" style="top:716.4px;color:#1c1cac">1.50 V</div><div class="lb" style="top:739.4px;color:#1c1cac">0 V</div><div class="lb" style="top:764.4px;color:#e8831c">593.731 mT</div><div class="lb" style="top:787.4px;color:#e8831c">445.298 mT</div><div class="lb" style="top:810.4px;color:#e8831c">296.866 mT</div><div class="lb" style="top:833.4px;color:#e8831c">148.433 mT</div><div class="lb" style="top:856.4px;color:#e8831c">0 T</div><div class="lb" style="top:881.4px;color:#5e1a7e">10.122 kA</div><div class="lb" style="top:904.4px;color:#5e1a7e">7.592 kA</div><div class="lb" style="top:927.4px;color:#5e1a7e">5.061 kA</div><div class="lb" style="top:950.4px;color:#5e1a7e">2.531 kA</div><div class="lb" style="top:973.4px;color:#5e1a7e">0 A</div><div class="tl" style="left:15.5px;top:740.6px"><span>0 s</span></div><div class="tl" style="left:190.4px;top:740.6px"><span>4 ms</span></div><div class="tl" style="left:365.2px;top:740.6px"><span>8 ms</span></div><div class="tl" style="left:540.1px;top:740.6px"><span>12 ms</span></div><div class="tl" style="left:715.0px;top:740.6px"><span>16 ms</span></div><div class="tl" style="left:889.9px;top:740.6px"><span>20 ms</span></div><div class="tl" style="left:1064.8px;top:740.6px"><span>24 ms</span></div><div class="tl" style="left:1239.6px;top:740.6px"><span>28 ms</span></div><div class="tl" style="left:1414.5px;top:740.6px"><span>32 ms</span></div><div class="tl" style="left:1589.4px;top:740.6px"><span>36 ms</span></div><div class="nm" style="left:53.4px;top:966.3px;color:#5e1a7e;letter-spacing:0.7px">I_p</div>
<svg width="1920" height="1080" viewBox="0 0 1920 1080"><path d="M1730.3 700.5L1741.8 690.3V699H1751V702H1741.8V710.7Z" fill="#2424c8"/><path d="M1711.5 64.5H1742.5Q1744.5 64.5 1744.5 66.5V97.5Q1744.5 100.5 1742.3 98.3L1710.3 66.6Q1708.8 64.5 1711.5 64.5Z" fill="#4d4d4d" stroke="#111" stroke-width="1"/><circle cx="1737" cy="71.3" r="3.6" fill="none" stroke="#9a9a9a" stroke-width="1.6"/><path d="M1734.2 74.2L1727.8 80.6" stroke="#9a9a9a" stroke-width="2.2" stroke-linecap="round"/></svg>
<div style="position:absolute;left:1769px;top:29px;width:160px;height:967px;border:1px solid #575250;background:#2d2d2d;"></div>
<div style="position:absolute;top:30.00px;font-size:15px;color:#ececec;white-space:nowrap;line-height:normal;font-weight:bold;letter-spacing:0.8px;left:1645.00px;width:400px;text-align:center;text-indent:0.8px;">Add New...</div>
<div class="btn" style="left:1778px;top:54px;width:63px;height:37px;"></div>
<div class="btn" style="left:1850px;top:54px;width:63px;height:37px;"></div>
<div class="btn" style="left:1778px;top:100px;width:63px;height:37px;"></div>
<div class="btn" style="left:1850px;top:100px;width:63px;height:37px;"></div>
<div class="btn" style="left:1778px;top:146px;width:63px;height:37px;"></div>
<div class="btn" style="left:1850px;top:146px;width:63px;height:37px;"></div>
<div class="btn" style="left:1778px;top:196px;width:63px;height:37px;"></div>
<div class="btn" style="left:1850px;top:196px;width:63px;height:37px;"></div>
<div style="position:absolute;top:63.00px;font-size:15px;color:#f4f4f4;white-space:nowrap;line-height:normal;letter-spacing:-0.25px;left:1609.50px;width:400px;text-align:center;text-indent:-0.25px;-webkit-text-stroke:0.3px #f4f4f4;">Cursors</div>
<div style="position:absolute;top:63.00px;font-size:15px;color:#f4f4f4;white-space:nowrap;line-height:normal;letter-spacing:0.3px;left:1681.50px;width:400px;text-align:center;text-indent:0.3px;-webkit-text-stroke:0.3px #f4f4f4;">Callout</div>
<div style="position:absolute;top:109.00px;font-size:15px;color:#f4f4f4;white-space:nowrap;line-height:normal;letter-spacing:0.1px;left:1609.50px;width:400px;text-align:center;text-indent:0.1px;-webkit-text-stroke:0.3px #f4f4f4;">Measure</div>
<div style="position:absolute;top:109.00px;font-size:15px;color:#f4f4f4;white-space:nowrap;line-height:normal;letter-spacing:-0.3px;left:1681.30px;width:400px;text-align:center;text-indent:-0.3px;-webkit-text-stroke:0.3px #f4f4f4;">Search</div>
<div style="position:absolute;top:147.00px;font-size:15px;color:#f4f4f4;white-space:nowrap;line-height:normal;letter-spacing:0.1px;left:1609.50px;width:400px;text-align:center;text-indent:0.1px;-webkit-text-stroke:0.3px #f4f4f4;">Results</div>
<div style="position:absolute;top:163.00px;font-size:15px;color:#f4f4f4;white-space:nowrap;line-height:normal;letter-spacing:0.1px;left:1609.50px;width:400px;text-align:center;text-indent:0.1px;-webkit-text-stroke:0.3px #f4f4f4;">Table</div>
<div style="position:absolute;top:155.00px;font-size:15px;color:#f4f4f4;white-space:nowrap;line-height:normal;letter-spacing:0.3px;left:1681.50px;width:400px;text-align:center;text-indent:0.3px;-webkit-text-stroke:0.3px #f4f4f4;">Plot</div>
<div style="position:absolute;top:205.00px;font-size:15px;color:#f4f4f4;white-space:nowrap;line-height:normal;letter-spacing:0.4px;left:1681.50px;width:400px;text-align:center;text-indent:0.4px;-webkit-text-stroke:0.3px #f4f4f4;">More...</div>
<div style="position:absolute;left:1773px;top:189px;width:144px;height:1px;background:#57504c;"></div>
<div style="position:absolute;left:1773px;top:241px;width:144px;height:1px;background:#57504c;"></div>
<div style="position:absolute;left:1760px;top:501.6px;width:4px;height:4px;border-radius:2px;background:#c8c8c8;"></div>
<div style="position:absolute;left:1760px;top:510.2px;width:4px;height:4px;border-radius:2px;background:#c8c8c8;"></div>
<div style="position:absolute;left:1760px;top:518.8px;width:4px;height:4px;border-radius:2px;background:#c8c8c8;"></div>
<svg width="1920" height="30" viewBox="0 0 1920 30"><g fill="#fff"><path d="M1785.8 4H1804.2L1801.6 9H1796.3V26H1790.8V9H1785.8Z"/><circle cx="1806.1" cy="17.9" r="8.25"/><path d="M1815.5 4H1820.2V26H1815.5Z"/><path d="M1826 16.7L1831.7 26H1824.2L1822.7 21.7Z"/><path d="M1831.7 26V10.6L1836 4.2H1836.4V26Z"/><path d="M1831 10.4H1839.8V14.2H1831Z"/><path d="M1839.7 9.9H1844.3V26H1839.7Z"/><path d="M1843 10H1847.4V14.3H1845.5Q1844.3 14.3 1844.3 16V12Z"/><path d="M1856.5 9.65A8.3 8.3 0 1 0 1856.5 26.3A8.3 8.3 0 1 0 1856.5 9.65ZM1856.5 14.6A3.35 3.35 0 1 1 1856.5 21.3A3.35 3.35 0 1 1 1856.5 14.6Z" fill-rule="evenodd"/><path d="M1866 26V9.9H1870.8V11.4Q1872.6 9.6 1875.1 9.6Q1880 9.6 1880 15.4V26H1875.2V16.2Q1875.2 13.8 1873.1 13.8Q1870.8 13.8 1870.8 16.6V26Z"/><path d="M1881.9 10.2H1886.7V26H1881.9Z"/><circle cx="1884.3" cy="6.5" r="2.85"/><path d="M1888 10.2H1893.7L1895.8 14.1L1898 10.2H1903.3L1898.5 17.9L1903.5 26H1897.8L1895.6 21.9L1893.3 26H1887.7L1892.9 17.9Z"/></g><path d="M1803.1 15.9Q1806.1 12.4 1809.1 15.9Z" fill="#323232"/><path d="M1803 20.1H1814.6V21.9H1809.6Q1806.1 23.9 1803 20.1Z" fill="#323232"/><path d="M1815 25.9H1820.1L1831.1 9.3H1826Z" fill="#1fbfe2"/></svg><svg width="1920" height="260" viewBox="0 0 1920 260"><rect x="1798" y="203" width="21.5" height="19" fill="none" stroke="#d0d0d0" stroke-width="2.2" stroke-dasharray="4 2.6"/><circle cx="1811" cy="210.3" r="4.6" fill="#2c2c2c" stroke="#cfcfcf" stroke-width="1.7"/><path d="M1807.6 213.8L1803.3 217.4" stroke="#cfcfcf" stroke-width="2.6" stroke-linecap="round"/><path d="M1815.4 217.6L1822.8 222.4L1819.9 223L1821.4 226.2L1820 226.8L1818.5 223.7L1816.6 225.6Z" fill="#b8b8b8"/></svg>
<div style="position:absolute;left:3px;top:984.4px;width:90px;height:94.10000000000002px;border-radius:4px;background:#cacaca;overflow:hidden;"><div style="position:absolute;left:0;top:0;width:90px;height:18.3px;background:#1f1f1f;"></div><div style="position:absolute;left:0;top:18.3px;width:90px;height:2.2px;background:#b2b2b2;"></div><div style="position:absolute;left:5.3px;top:-1.2px;font-size:15px;line-height:18px;color:#f2ea3a;white-space:nowrap;letter-spacing:-0.55px;word-spacing:-0.6px;-webkit-text-stroke:0.35px #f2ea3a;">Ch 1</div><div style="position:absolute;left:0;top:20.8px;width:90px;height:16.8px;background:#fe0000;"></div><svg style="left:0px;top:21.4px" width="17" height="16" viewBox="0 0 17 16"><path d="M8 0.3L15.5 15H0.5Z" fill="#f4f418" stroke="#4a3a78" stroke-width="0.9" stroke-linejoin="round"/><path d="M8 5V13.6" stroke="#8c8c30" stroke-width="1.5"/></svg><div style="position:absolute;left:16.6px;top:19.0px;font-size:15px;line-height:17px;color:#fff;white-space:nowrap;letter-spacing:.35px;-webkit-text-stroke:0.3px #fff;">Clipping</div><div style="position:absolute;left:5.2px;top:39.6px;font-size:14px;line-height:16px;color:#0a0a0a;white-space:nowrap;letter-spacing:.2px;">5 V/div</div><div style="position:absolute;left:5.2px;top:58.6px;font-size:14px;line-height:16px;color:#0a0a0a;white-space:nowrap;letter-spacing:.2px;">1 M&#937;</div><div style="position:absolute;left:5.2px;top:77.3px;font-size:14px;line-height:16px;color:#0a0a0a;white-space:nowrap;letter-spacing:.2px;">200 kHz</div><div style="position:absolute;left:71.4px;top:77.0px;font-size:9.2px;line-height:9px;font-weight:bold;color:#111;">B</div><div style="position:absolute;left:77.2px;top:79.6px;font-size:9px;line-height:9px;font-weight:bold;color:#111;">w</div></div><div style="position:absolute;left:98px;top:984.4px;width:90px;height:94.10000000000002px;border-radius:4px;background:#cacaca;overflow:hidden;"><div style="position:absolute;left:0;top:0;width:90px;height:18.3px;background:#1f4144;"></div><div style="position:absolute;left:0;top:18.3px;width:90px;height:2.2px;background:#b2b2b2;"></div><div style="position:absolute;left:5.3px;top:-1.2px;font-size:15px;line-height:18px;color:#2cc8d6;white-space:nowrap;letter-spacing:-0.55px;word-spacing:-0.6px;-webkit-text-stroke:0.35px #2cc8d6;">Ch 2</div><div style="position:absolute;left:0;top:20.8px;width:90px;height:16.8px;background:#fe0000;"></div><svg style="left:0px;top:21.4px" width="17" height="16" viewBox="0 0 17 16"><path d="M8 0.3L15.5 15H0.5Z" fill="#f4f418" stroke="#4a3a78" stroke-width="0.9" stroke-linejoin="round"/><path d="M8 5V13.6" stroke="#8c8c30" stroke-width="1.5"/></svg><div style="position:absolute;left:16.6px;top:19.0px;font-size:15px;line-height:17px;color:#fff;white-space:nowrap;letter-spacing:.35px;-webkit-text-stroke:0.3px #fff;">Clipping</div><div style="position:absolute;left:5.2px;top:39.6px;font-size:14px;line-height:16px;color:#0a0a0a;white-space:nowrap;letter-spacing:.2px;">250 mV/div</div><div style="position:absolute;left:5.2px;top:58.6px;font-size:14px;line-height:16px;color:#0a0a0a;white-space:nowrap;letter-spacing:.2px;">1 M&#937;</div><div style="position:absolute;left:5.2px;top:77.3px;font-size:14px;line-height:16px;color:#0a0a0a;white-space:nowrap;letter-spacing:.2px;">200 kHz</div><div style="position:absolute;left:71.4px;top:77.0px;font-size:9.2px;line-height:9px;font-weight:bold;color:#111;">B</div><div style="position:absolute;left:77.2px;top:79.6px;font-size:9px;line-height:9px;font-weight:bold;color:#111;">w</div></div><div style="position:absolute;left:193px;top:984.4px;width:90px;height:94.10000000000002px;border-radius:4px;background:#cacaca;overflow:hidden;"><div style="position:absolute;left:0;top:0;width:90px;height:18.3px;background:#47272c;"></div><div style="position:absolute;left:0;top:18.3px;width:90px;height:2.2px;background:#b2b2b2;"></div><div style="position:absolute;left:5.3px;top:-1.2px;font-size:15px;line-height:18px;color:#ffffff;white-space:nowrap;letter-spacing:-0.55px;word-spacing:-0.6px;-webkit-text-stroke:0.35px #ffffff;">Ch 3</div><div style="position:absolute;left:0;top:20.8px;width:90px;height:16.8px;background:#fe0000;"></div><svg style="left:0px;top:21.4px" width="17" height="16" viewBox="0 0 17 16"><path d="M8 0.3L15.5 15H0.5Z" fill="#f4f418" stroke="#4a3a78" stroke-width="0.9" stroke-linejoin="round"/><path d="M8 5V13.6" stroke="#8c8c30" stroke-width="1.5"/></svg><div style="position:absolute;left:16.6px;top:19.0px;font-size:15px;line-height:17px;color:#fff;white-space:nowrap;letter-spacing:.35px;-webkit-text-stroke:0.3px #fff;">Clipping</div><div style="position:absolute;left:5.2px;top:39.6px;font-size:14px;line-height:16px;color:#0a0a0a;white-space:nowrap;letter-spacing:.2px;">450 mV/div</div><div style="position:absolute;left:5.2px;top:58.6px;font-size:14px;line-height:16px;color:#0a0a0a;white-space:nowrap;letter-spacing:.2px;">1 M&#937;</div><div style="position:absolute;left:5.2px;top:77.3px;font-size:14px;line-height:16px;color:#0a0a0a;white-space:nowrap;letter-spacing:.2px;">200 kHz</div><div style="position:absolute;left:71.4px;top:77.0px;font-size:9.2px;line-height:9px;font-weight:bold;color:#111;">B</div><div style="position:absolute;left:77.2px;top:79.6px;font-size:9px;line-height:9px;font-weight:bold;color:#111;">w</div></div><div style="position:absolute;left:288px;top:1003px;width:90px;height:75.5px;border-radius:4px;background:#cacaca;overflow:hidden;"><div style="position:absolute;left:0;top:0;width:90px;height:18.3px;background:#394527;"></div><div style="position:absolute;left:0;top:18.3px;width:90px;height:2.2px;background:#b2b2b2;"></div><div style="position:absolute;left:5.3px;top:-1.2px;font-size:15px;line-height:18px;color:#92d032;white-space:nowrap;letter-spacing:-0.55px;word-spacing:-0.6px;-webkit-text-stroke:0.35px #92d032;">Ch 4</div><div style="position:absolute;left:5.2px;top:21.0px;font-size:14px;line-height:16px;color:#0a0a0a;white-space:nowrap;letter-spacing:.2px;">200 mV/div</div><div style="position:absolute;left:5.2px;top:40.0px;font-size:14px;line-height:16px;color:#0a0a0a;white-space:nowrap;letter-spacing:.2px;">1 M&#937;</div><div style="position:absolute;left:5.2px;top:58.7px;font-size:14px;line-height:16px;color:#0a0a0a;white-space:nowrap;letter-spacing:.2px;">200 kHz</div><div style="position:absolute;left:71.4px;top:58.4px;font-size:9.2px;line-height:9px;font-weight:bold;color:#111;">B</div><div style="position:absolute;left:77.2px;top:61.0px;font-size:9px;line-height:9px;font-weight:bold;color:#111;">w</div></div><div style="position:absolute;left:383px;top:1003px;width:90px;height:75.5px;border-radius:4px;background:#cacaca;overflow:hidden;"><div style="position:absolute;left:0;top:0;width:90px;height:18.3px;background:#4d3623;"></div><div style="position:absolute;left:0;top:18.3px;width:90px;height:2.2px;background:#b2b2b2;"></div><div style="position:absolute;left:5.3px;top:-1.2px;font-size:15px;line-height:18px;color:#fb9a2c;white-space:nowrap;letter-spacing:-0.55px;word-spacing:-0.6px;-webkit-text-stroke:0.35px #fb9a2c;">Ch 5</div><div style="position:absolute;left:5.2px;top:21.0px;font-size:14px;line-height:16px;color:#0a0a0a;white-space:nowrap;letter-spacing:.2px;">1 V/div</div><div style="position:absolute;left:5.2px;top:40.0px;font-size:14px;line-height:16px;color:#0a0a0a;white-space:nowrap;letter-spacing:.2px;">1 M&#937;</div><div style="position:absolute;left:5.2px;top:58.7px;font-size:14px;line-height:16px;color:#0a0a0a;white-space:nowrap;letter-spacing:.2px;">200 kHz</div><div style="position:absolute;left:71.4px;top:58.4px;font-size:9.2px;line-height:9px;font-weight:bold;color:#111;">B</div><div style="position:absolute;left:77.2px;top:61.0px;font-size:9px;line-height:9px;font-weight:bold;color:#111;">w</div></div><div style="position:absolute;left:478px;top:984.4px;width:90px;height:94.10000000000002px;border-radius:4px;background:#cacaca;overflow:hidden;"><div style="position:absolute;left:0;top:0;width:90px;height:18.3px;background:#2828c2;"></div><div style="position:absolute;left:0;top:18.3px;width:90px;height:2.2px;background:#b2b2b2;"></div><div style="position:absolute;left:5.3px;top:-1.2px;font-size:15px;line-height:18px;color:#ffffff;white-space:nowrap;letter-spacing:-0.55px;word-spacing:-0.6px;-webkit-text-stroke:0.35px #ffffff;">Ch 6</div><div style="position:absolute;left:0;top:20.8px;width:90px;height:16.8px;background:#fe0000;"></div><svg style="left:0px;top:21.4px" width="17" height="16" viewBox="0 0 17 16"><path d="M8 0.3L15.5 15H0.5Z" fill="#f4f418" stroke="#4a3a78" stroke-width="0.9" stroke-linejoin="round"/><path d="M8 5V13.6" stroke="#8c8c30" stroke-width="1.5"/></svg><div style="position:absolute;left:16.6px;top:19.0px;font-size:15px;line-height:17px;color:#fff;white-space:nowrap;letter-spacing:.35px;-webkit-text-stroke:0.3px #fff;">Clipping</div><div style="position:absolute;left:5.2px;top:39.6px;font-size:14px;line-height:16px;color:#0a0a0a;white-space:nowrap;letter-spacing:.2px;">750 mV/div</div><div style="position:absolute;left:5.2px;top:58.6px;font-size:14px;line-height:16px;color:#0a0a0a;white-space:nowrap;letter-spacing:.2px;">1 M&#937;</div><div style="position:absolute;left:5.2px;top:77.3px;font-size:14px;line-height:16px;color:#0a0a0a;white-space:nowrap;letter-spacing:.2px;">200 kHz</div><div style="position:absolute;left:71.4px;top:77.0px;font-size:9.2px;line-height:9px;font-weight:bold;color:#111;">B</div><div style="position:absolute;left:77.2px;top:79.6px;font-size:9px;line-height:9px;font-weight:bold;color:#111;">w</div></div><div style="position:absolute;left:573px;top:1003px;width:90px;height:75.5px;border-radius:4px;background:#cacaca;overflow:hidden;"><div style="position:absolute;left:0;top:0;width:90px;height:18.3px;background:#4d3623;"></div><div style="position:absolute;left:0;top:18.3px;width:90px;height:2.2px;background:#b2b2b2;"></div><div style="position:absolute;left:5.3px;top:-1.2px;font-size:15px;line-height:18px;color:#fb9a2c;white-space:nowrap;letter-spacing:0.4px;-webkit-text-stroke:0.35px #fb9a2c;">Math 1</div><div style="position:absolute;left:5.2px;top:21.0px;font-size:14px;line-height:16px;color:#0a0a0a;white-space:nowrap;letter-spacing:.2px;font-weight:bold;">74.2 mT/div</div><div style="position:absolute;left:5.2px;top:40.0px;font-size:14px;line-height:16px;color:#0a0a0a;white-space:nowrap;letter-spacing:.2px;">Intg(Ch2)&#8230;</div></div><div style="position:absolute;left:668px;top:1003px;width:90px;height:75.5px;border-radius:4px;background:#cacaca;overflow:hidden;"><div style="position:absolute;left:0;top:0;width:90px;height:18.3px;background:#30222f;"></div><div style="position:absolute;left:0;top:18.3px;width:90px;height:2.2px;background:#b2b2b2;"></div><div style="position:absolute;left:5.3px;top:-1.2px;font-size:15px;line-height:18px;color:#ffffff;white-space:nowrap;letter-spacing:0.4px;-webkit-text-stroke:0.35px #ffffff;">Math 2</div><div style="position:absolute;left:5.2px;top:21.0px;font-size:14px;line-height:16px;color:#0a0a0a;white-space:nowrap;letter-spacing:.2px;font-weight:bold;">1.265 kA/&#8230;</div><div style="position:absolute;left:5.2px;top:40.0px;font-size:14px;line-height:16px;color:#0a0a0a;white-space:nowrap;letter-spacing:.2px;">-Intg(Ch3&#8230;</div></div><div style="position:absolute;left:1118px;top:1000px;width:1px;height:78px;background:#5a524e;"></div><div style="position:absolute;left:1269px;top:1000px;width:1px;height:78px;background:#5a524e;"></div><div style="position:absolute;left:1811px;top:1000px;width:1px;height:78px;background:#5a524e;"></div><div class="btn" style="left:1129.3px;top:999.3px;width:39.5px;height:79.2px;border-radius:7px;"><div style="position:absolute;left:3.5px;top:7px;width:31.5px;height:2.2px;background:#b22222;"></div><div style="position:absolute;left:-11px;width:60px;text-align:center;top:20.0px;font-size:14px;line-height:16px;color:#f4f4f4;white-space:nowrap;-webkit-text-stroke:0.25px #f4f4f4;">Add</div><div style="position:absolute;left:-11px;width:60px;text-align:center;top:36.1px;font-size:14px;line-height:16px;color:#f4f4f4;white-space:nowrap;-webkit-text-stroke:0.25px #f4f4f4;">New</div><div style="position:absolute;left:-11px;width:60px;text-align:center;top:52.2px;font-size:14px;line-height:16px;color:#f4f4f4;white-space:nowrap;-webkit-text-stroke:0.25px #f4f4f4;">Math</div></div><div class="btn" style="left:1174.3px;top:999.3px;width:39.5px;height:79.2px;border-radius:7px;"><div style="position:absolute;left:3.5px;top:7px;width:31.5px;height:2.2px;background:#c2c8e2;"></div><div style="position:absolute;left:-11px;width:60px;text-align:center;top:20.0px;font-size:14px;line-height:16px;color:#f4f4f4;white-space:nowrap;-webkit-text-stroke:0.25px #f4f4f4;">Add</div><div style="position:absolute;left:-11px;width:60px;text-align:center;top:36.1px;font-size:14px;line-height:16px;color:#f4f4f4;white-space:nowrap;-webkit-text-stroke:0.25px #f4f4f4;">New</div><div style="position:absolute;left:-11px;width:60px;text-align:center;top:52.2px;font-size:14px;line-height:16px;color:#f4f4f4;white-space:nowrap;-webkit-text-stroke:0.25px #f4f4f4;">Ref</div></div><div class="btn" style="left:1219.4px;top:999.3px;width:39.5px;height:79.2px;border-radius:7px;"><div style="position:absolute;left:3.5px;top:7px;width:31.5px;height:2.2px;background:#c466f4;"></div><div style="position:absolute;left:-11px;width:60px;text-align:center;top:20.0px;font-size:14px;line-height:16px;color:#f4f4f4;white-space:nowrap;-webkit-text-stroke:0.25px #f4f4f4;">Add</div><div style="position:absolute;left:-11px;width:60px;text-align:center;top:36.1px;font-size:14px;line-height:16px;color:#f4f4f4;white-space:nowrap;-webkit-text-stroke:0.25px #f4f4f4;">New</div><div style="position:absolute;left:-11px;width:60px;text-align:center;top:52.2px;font-size:14px;line-height:16px;color:#f4f4f4;white-space:nowrap;-webkit-text-stroke:0.25px #f4f4f4;">Bus</div></div><div style="position:absolute;left:1279.9px;top:1003.0px;width:200.5px;height:75.3px;border-radius:4px;background:#cacaca;overflow:hidden;border:1px solid #040404;"><div style="position:absolute;left:0;top:0;width:200.5px;height:18.8px;background:#58595b;"></div><div style="position:absolute;left:0;top:18.8px;width:200.5px;height:1.8px;background:#b4b4b4;"></div><div style="position:absolute;left:5.2px;top:-0.3px;font-size:15px;line-height:18px;color:#f4f4f4;white-space:nowrap;letter-spacing:.45px;">Horizontal</div><div style="position:absolute;left:4.4px;top:20.0px;font-size:14px;line-height:16px;color:#0a0a0a;white-space:nowrap;letter-spacing:0.2px;">4 ms/div</div><div style="position:absolute;left:110.3px;top:20.0px;font-size:14px;line-height:16px;color:#0a0a0a;white-space:nowrap;letter-spacing:0.2px;">40 ms</div><div style="position:absolute;left:4.4px;top:39.0px;font-size:14px;line-height:16px;color:#0a0a0a;white-space:nowrap;letter-spacing:0.2px;">SR: 1 MS/s</div><div style="position:absolute;left:110.3px;top:39.0px;font-size:14px;line-height:16px;color:#0a0a0a;white-space:nowrap;letter-spacing:0.2px;">1 &#181;s/pt</div><div style="position:absolute;left:4.4px;top:57.8px;font-size:14px;line-height:16px;color:#0a0a0a;white-space:nowrap;letter-spacing:0.2px;">RL: 40 kpts</div><div style="position:absolute;left:124.3px;top:57.8px;font-size:14px;line-height:16px;color:#0a0a0a;white-space:nowrap;letter-spacing:0.9px;">3%</div><svg style="left:110.3px;top:58.2px" width="11" height="14" viewBox="0 0 11 14"><path d="M0.4 0.4H9.6V9.6H7L5 12.8L3 9.6H0.4Z" fill="#f5891f"/><path d="M1.4 1.4H8.6V8.7H6.4L5 10.6L3.6 8.7H1.4Z" fill="#000"/><path d="M2.5 2.6H7.5V4H5.7V8H4.3V4H2.5Z" fill="#fff"/></svg></div><div style="position:absolute;left:1484.9px;top:1003.0px;width:159.6px;height:75.3px;border-radius:4px;background:#cacaca;overflow:hidden;border:1px solid #040404;"><div style="position:absolute;left:0;top:0;width:159.6px;height:18.8px;background:#58595b;"></div><div style="position:absolute;left:0;top:18.8px;width:159.6px;height:1.8px;background:#b4b4b4;"></div><div style="position:absolute;left:5.2px;top:-0.3px;font-size:15px;line-height:18px;color:#f4f4f4;white-space:nowrap;letter-spacing:.45px;">Trigger</div><div style="position:absolute;left:4px;top:21px;width:30px;height:15.5px;border-radius:5px;background:#2424c4;border:1px solid #0a0a30;"></div><div style="position:absolute;left:4px;top:20.2px;width:30px;text-align:center;font-size:14px;line-height:16px;color:#fff;">6</div><svg style="left:42px;top:22px" width="20" height="14" viewBox="0 0 20 14"><path d="M2 11.2H6.6" fill="none" stroke="#8c8cc0" stroke-width="1.2"/><path d="M6.4 11.2L14.1 1.6H18" fill="none" stroke="#2c2c86" stroke-width="1.2"/></svg><div style="position:absolute;left:69.8px;top:20.0px;font-size:14px;line-height:16px;color:#0a0a0a;white-space:nowrap;letter-spacing:0.2px;">3 V</div></div><div style="position:absolute;left:1650.4px;top:1003.0px;width:149.4px;height:75.3px;border-radius:4px;background:#cacaca;overflow:hidden;border:1px solid #040404;"><div style="position:absolute;left:0;top:0;width:149.4px;height:18.8px;background:#58595b;"></div><div style="position:absolute;left:0;top:18.8px;width:149.4px;height:1.8px;background:#b4b4b4;"></div><div style="position:absolute;left:5.2px;top:-0.3px;font-size:15px;line-height:18px;color:#f4f4f4;white-space:nowrap;letter-spacing:.45px;">Acquisition</div><div style="position:absolute;left:4.4px;top:20.0px;font-size:14px;line-height:16px;color:#0a0a0a;white-space:nowrap;letter-spacing:0.2px;">Manual,</div><div style="position:absolute;left:85.3px;top:20.0px;font-size:14px;line-height:16px;color:#0a0a0a;white-space:nowrap;letter-spacing:0.2px;">Analyze</div><div style="position:absolute;left:4.4px;top:39.0px;font-size:14px;line-height:16px;color:#0a0a0a;white-space:nowrap;letter-spacing:0px;">High Res: 16 bits</div><div style="position:absolute;left:4.4px;top:57.8px;font-size:14px;line-height:16px;color:#0a0a0a;white-space:nowrap;letter-spacing:0.2px;">Single: 1 /1</div></div><div style="position:absolute;left:1822.5px;top:999.3px;width:89.5px;height:35.6px;border-radius:6px;background:#fd1d25;border:1px solid #7a1a1a;"></div><div style="position:absolute;left:1822.5px;top:1006px;width:89.5px;text-align:center;font-size:14px;line-height:18px;font-weight:bold;color:#fff;letter-spacing:.3px;">Stopped</div><div style="position:absolute;left:1822.5px;top:1040.3px;width:89.5px;height:38px;border-radius:4px;background:#cacaca;"></div><div style="position:absolute;left:1812.5px;top:1042px;width:109.5px;text-align:center;font-size:14px;line-height:16px;color:#0a0a0a;letter-spacing:.45px;">24 Apr 2025</div><div style="position:absolute;left:1812.5px;top:1058.6px;width:109.5px;text-align:center;font-size:14px;line-height:16px;color:#0a0a0a;letter-spacing:.3px;">6:18:24 PM</div>
</div></body></html>
